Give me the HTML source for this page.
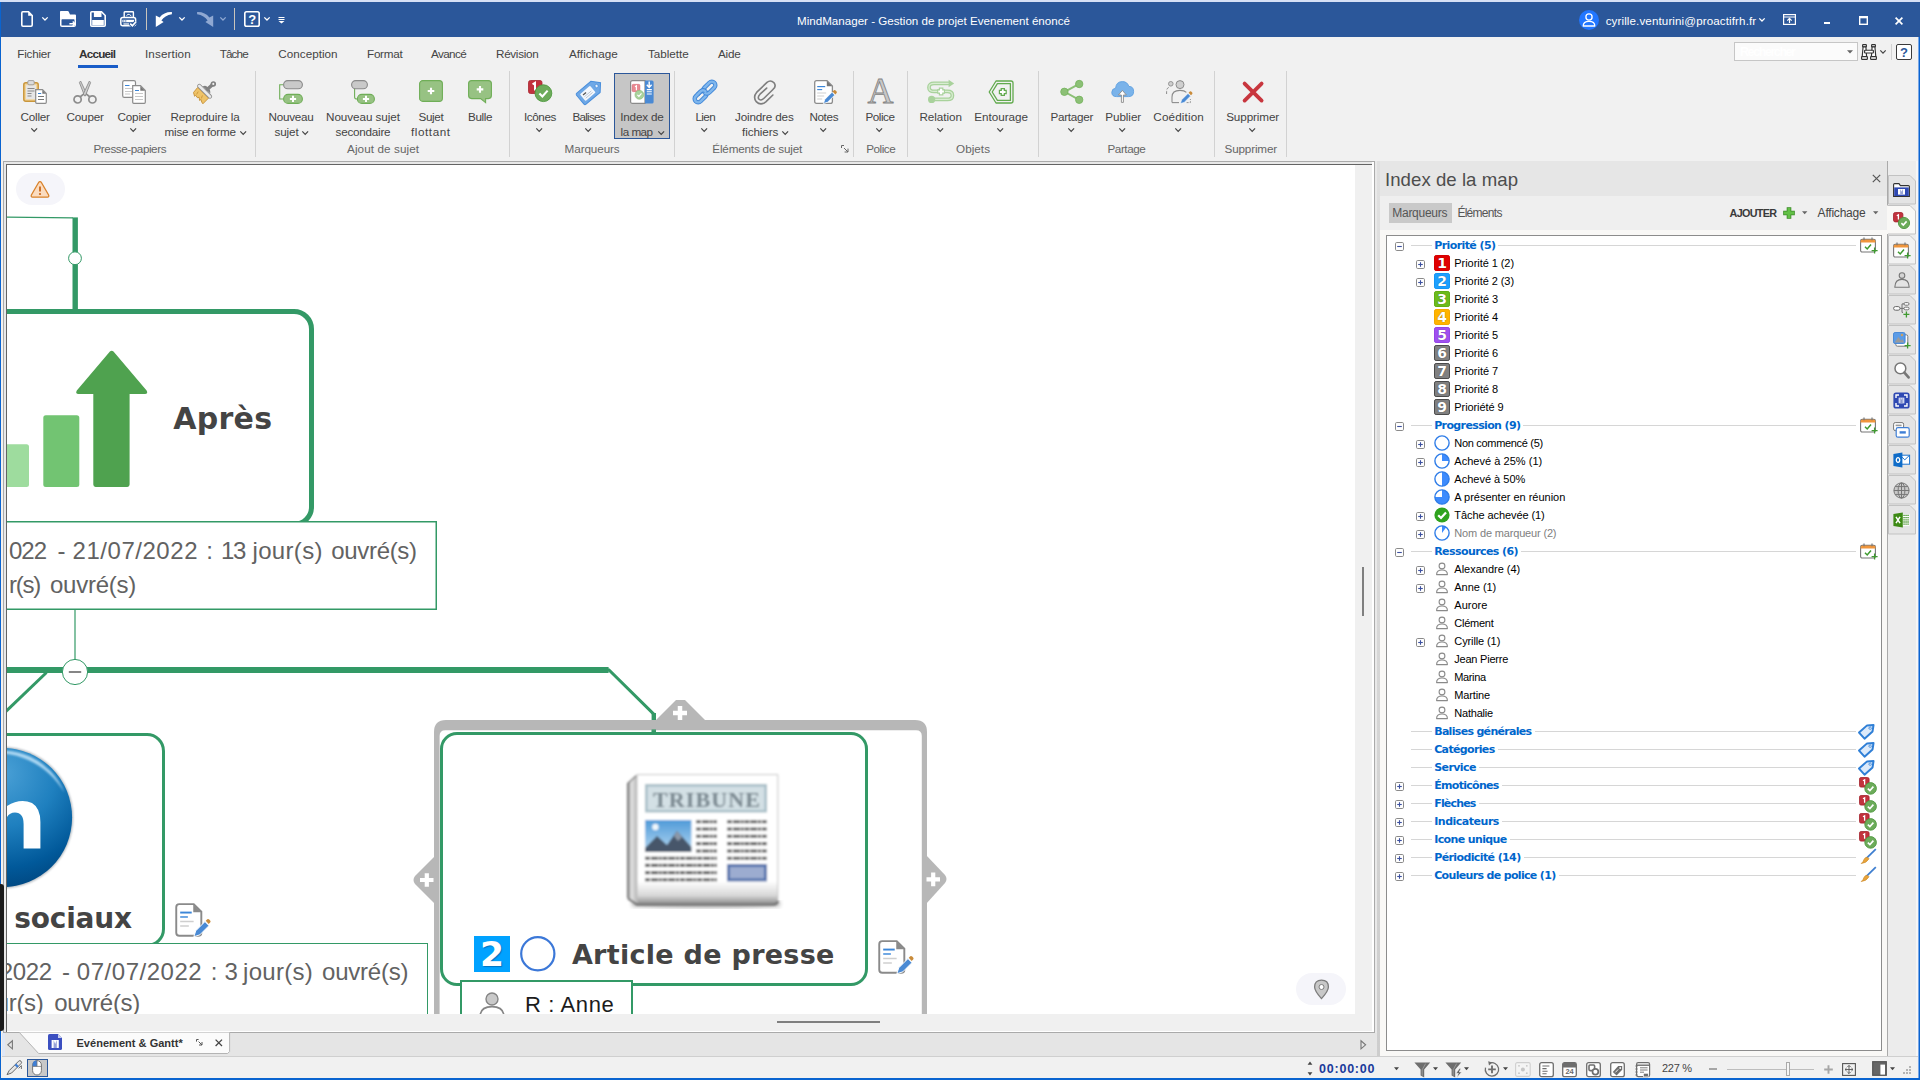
<!DOCTYPE html>
<html lang="fr"><head><meta charset="utf-8"><title>MindManager - Gestion de projet Evenement énoncé</title>
<style>
html,body{margin:0;padding:0}
body{width:1920px;height:1080px;overflow:hidden;position:relative;background:#f1f1f1;font-family:"Liberation Sans",sans-serif}
.b{position:absolute;display:block;box-sizing:border-box}
.t{position:absolute;white-space:nowrap;margin:0;padding:0}
svg{overflow:visible}
</style></head>
<body>
<div class="b" style="left:0px;top:0px;width:1920px;height:2px;background:#d6e0f5;"></div>
<div class="b" style="left:0px;top:2px;width:1920px;height:35px;background:#2b579a;"></div>
<svg class="b" style="left:21px;top:11px;" width="12" height="16" viewBox="0 0 12 16"><path d="M1.8 0.8 H7.5 L11.2 4.5 V14 Q11.2 15.2 10 15.2 H2 Q0.8 15.2 0.8 14 V2 Q0.8 0.8 1.8 0.8 Z" fill="none" stroke="#fff" stroke-width="1.6"/><path d="M7.2 0.8 L11.2 4.8 H7.2 Z" fill="#fff"/></svg>
<svg class="b" style="left:42px;top:17px;" width="6" height="4" viewBox="0 0 6 4"><path d="M0.3 0.4 L3.0 3 L5.7 0.4" fill="none" stroke="#fff" stroke-width="1.3"/></svg>
<svg class="b" style="left:60px;top:11px;" width="17" height="16" viewBox="0 0 17 16"><path d="M0.8 0H7.6Q8.4 0 8.8 0.8L10 3.4H15Q16 3.4 16 4.4V8.4H0V0.8Q0 0 0.8 0Z" fill="#fff"/><rect x="0.75" y="7.6" width="14.5" height="7.6" rx="1.3" fill="#2b579a" stroke="#fff" stroke-width="1.5"/><path d="M9.4 12.7H14.8M12.7 10.5L14.9 12.7 12.7 14.9" fill="none" stroke="#fff" stroke-width="1.4"/></svg>
<svg class="b" style="left:90px;top:11px;" width="16" height="16" viewBox="0 0 16 16"><path d="M0.8 1.8Q0.8 0.8 1.8 0.8H11.5L15.2 4.5V14.2Q15.2 15.2 14.2 15.2H1.8Q0.8 15.2 0.8 14.2Z" fill="none" stroke="#fff" stroke-width="1.6"/><rect x="3.9" y="0.8" width="7.6" height="5.2" fill="#fff"/><rect x="2.2" y="9" width="11.6" height="5.4" fill="#fff"/></svg>
<svg class="b" style="left:120px;top:11px;" width="17" height="16" viewBox="0 0 17 16"><path d="M4.2 6.4V1.4Q4.2 0.8 4.8 0.8H12.8Q13.4 0.8 13.4 1.4V6.4" fill="none" stroke="#fff" stroke-width="1.4"/><path d="M6.4 4.8Q8 2.4 9.6 3.6L11.4 5" fill="none" stroke="#fff" stroke-width="1"/><rect x="0.8" y="6.6" width="14.8" height="8.2" rx="2" fill="#2b579a" stroke="#fff" stroke-width="1.5"/><rect x="2.4" y="8.8" width="11.6" height="2.4" fill="#fff"/><rect x="3.2" y="9.4" width="1.1" height="1.1" fill="#2b579a"/><rect x="5.2" y="9.4" width="1.1" height="1.1" fill="#2b579a"/><path d="M3.4 13H9" stroke="#fff" stroke-width="1.2"/><path d="M10.2 12.6L12.4 14.8 15.8 11" fill="none" stroke="#2b579a" stroke-width="3.6"/><path d="M10.2 12.6L12.4 14.8 15.8 11" fill="none" stroke="#fff" stroke-width="1.8"/></svg>
<div class="b" style="left:146px;top:8px;width:1px;height:22px;background:#c9c4bc;"></div>
<svg class="b" style="left:155px;top:11px;" width="18" height="16" viewBox="0 0 18 16"><path d="M16.9 0.9Q9 0.6 4.6 6.4L0.8 4.6V15.9L8.6 11 6.4 9.4Q9.6 4.4 16.9 3.2Z" fill="#fff"/></svg>
<svg class="b" style="left:179px;top:17px;" width="6" height="4" viewBox="0 0 6 4"><path d="M0.3 0.4 L3.0 3 L5.7 0.4" fill="none" stroke="#fff" stroke-width="1.3"/></svg>
<svg class="b" style="left:196px;top:11px;" width="18" height="16" viewBox="0 0 18 16"><path d="M1.1 0.9Q9 0.6 13.4 6.4L17.2 4.6V15.9L9.4 11 11.6 9.4Q8.4 4.4 1.1 3.2Z" fill="#8fa8d2"/></svg>
<svg class="b" style="left:220px;top:17px;" width="6" height="4" viewBox="0 0 6 4"><path d="M0.3 0.4 L3.0 3 L5.7 0.4" fill="none" stroke="#8fa8d2" stroke-width="1.3"/></svg>
<div class="b" style="left:234px;top:8px;width:1px;height:22px;background:#c9c4bc;"></div>
<svg class="b" style="left:244px;top:11px;" width="16" height="16" viewBox="0 0 16 16"><rect x="0.8" y="0.8" width="14.4" height="14.4" rx="1.8" fill="none" stroke="#fff" stroke-width="1.6"/></svg>
<div class="t" style="top:11.20px;font-size:13px;line-height:17px;color:#fff;font-family:'Liberation Sans', sans-serif;font-weight:700;left:252.20px;transform:translateX(-50%);">?</div>
<svg class="b" style="left:264px;top:17px;" width="6" height="4" viewBox="0 0 6 4"><path d="M0.3 0.4 L3.0 3 L5.7 0.4" fill="none" stroke="#fff" stroke-width="1.3"/></svg>
<svg class="b" style="left:278px;top:17px;" width="7" height="7" viewBox="0 0 7 7"><rect x="0.5" y="0" width="6" height="1" fill="#fff"/><rect x="0.5" y="2" width="6" height="1" fill="#fff"/><path d="M0.5 4H6.5L3.5 6.6Z" fill="#fff"/></svg>
<div class="t" style="top:12.78px;font-size:11.6px;line-height:15px;color:#fff;font-family:'Liberation Sans', sans-serif;left:797.00px;letter-spacing:0.008px;">MindManager - Gestion de projet Evenement énoncé</div>
<svg class="b" style="left:1579px;top:10px;" width="20" height="20" viewBox="0 0 20 20"><circle cx="10" cy="10" r="10" fill="#2176ff"/><circle cx="10" cy="7" r="3.1" fill="none" stroke="#fff" stroke-width="1.3"/><path d="M4.2 16 Q4.2 11.4 10 11.4 Q15.8 11.4 15.8 16 Z" fill="none" stroke="#fff" stroke-width="1.3" stroke-linejoin="round"/></svg>
<div class="t" style="top:12.78px;font-size:11.6px;line-height:15px;color:#fff;font-family:'Liberation Sans', sans-serif;left:1605.70px;letter-spacing:0.114px;">cyrille.venturini@proactifrh.fr</div>
<svg class="b" style="left:1759px;top:18px;" width="6" height="4" viewBox="0 0 6 4"><path d="M0.3 0.4 L3.0 3 L5.7 0.4" fill="none" stroke="#fff" stroke-width="1.3"/></svg>
<svg class="b" style="left:1783px;top:14px;" width="13" height="11" viewBox="0 0 13 11"><rect x="0.6" y="0.6" width="11.8" height="9.8" fill="none" stroke="#fff" stroke-width="1.2"/><path d="M0.6 3 H12.4" stroke="#fff" stroke-width="1"/><path d="M6.5 9 V4.6 M4.3 6.6 L6.5 4.4 L8.7 6.6" fill="none" stroke="#fff" stroke-width="1.2"/></svg>
<div class="b" style="left:1824px;top:22px;width:6px;height:2px;background:#fff;"></div>
<svg class="b" style="left:1859px;top:16px;" width="9" height="9" viewBox="0 0 9 9"><rect x="0.7" y="0.7" width="7.6" height="7.6" fill="none" stroke="#fff" stroke-width="1.4"/><rect x="0.7" y="0.7" width="7.6" height="1.6" fill="#fff"/></svg>
<svg class="b" style="left:1895px;top:17px;" width="8" height="8" viewBox="0 0 8 8"><path d="M0.6 0.6 L7.4 7.4 M7.4 0.6 L0.6 7.4" stroke="#fff" stroke-width="1.7"/></svg>
<div class="b" style="left:0px;top:2px;width:1px;height:1078px;background:#0a64d0;"></div>
<div class="b" style="left:1919px;top:37px;width:1px;height:1043px;background:#0a64d0;"></div>
<div class="b" style="left:1918px;top:37px;width:1px;height:1041px;background:#7aa7e6;"></div>
<div class="b" style="left:0px;top:1078px;width:1920px;height:2px;background:#0a64d0;"></div>
<div class="b" style="left:1px;top:37px;width:1px;height:1041px;background:#f8f1ea;"></div>
<div class="t" style="top:46.45px;font-size:11.7px;line-height:15px;color:#444;font-family:'Liberation Sans', sans-serif;left:17.30px;letter-spacing:-0.230px;">Fichier</div>
<div class="t" style="top:46.45px;font-size:11.7px;line-height:15px;color:#333;font-family:'Liberation Sans', sans-serif;font-weight:700;left:79.00px;letter-spacing:-0.763px;">Accueil</div>
<div class="t" style="top:46.45px;font-size:11.7px;line-height:15px;color:#444;font-family:'Liberation Sans', sans-serif;left:145.00px;letter-spacing:0.109px;">Insertion</div>
<div class="t" style="top:46.45px;font-size:11.7px;line-height:15px;color:#444;font-family:'Liberation Sans', sans-serif;left:219.70px;letter-spacing:-0.871px;">Tâche</div>
<div class="t" style="top:46.45px;font-size:11.7px;line-height:15px;color:#444;font-family:'Liberation Sans', sans-serif;left:278.30px;letter-spacing:0.018px;">Conception</div>
<div class="t" style="top:46.45px;font-size:11.7px;line-height:15px;color:#444;font-family:'Liberation Sans', sans-serif;left:367.00px;letter-spacing:-0.263px;">Format</div>
<div class="t" style="top:46.45px;font-size:11.7px;line-height:15px;color:#444;font-family:'Liberation Sans', sans-serif;left:431.00px;letter-spacing:-0.616px;">Avancé</div>
<div class="t" style="top:46.45px;font-size:11.7px;line-height:15px;color:#444;font-family:'Liberation Sans', sans-serif;left:496.00px;letter-spacing:-0.304px;">Révision</div>
<div class="t" style="top:46.45px;font-size:11.7px;line-height:15px;color:#444;font-family:'Liberation Sans', sans-serif;left:569.00px;letter-spacing:0.021px;">Affichage</div>
<div class="t" style="top:46.45px;font-size:11.7px;line-height:15px;color:#444;font-family:'Liberation Sans', sans-serif;left:648.00px;letter-spacing:-0.034px;">Tablette</div>
<div class="t" style="top:46.45px;font-size:11.7px;line-height:15px;color:#444;font-family:'Liberation Sans', sans-serif;left:718.00px;letter-spacing:-0.235px;">Aide</div>
<div class="b" style="left:78px;top:65px;width:40px;height:3px;background:#1a5dc8;"></div>
<div class="b" style="left:255px;top:71px;width:1px;height:86px;background:#d2d2d2;"></div>
<div class="b" style="left:509px;top:71px;width:1px;height:86px;background:#d2d2d2;"></div>
<div class="b" style="left:674px;top:71px;width:1px;height:86px;background:#d2d2d2;"></div>
<div class="b" style="left:853px;top:71px;width:1px;height:86px;background:#d2d2d2;"></div>
<div class="b" style="left:907px;top:71px;width:1px;height:86px;background:#d2d2d2;"></div>
<div class="b" style="left:1038px;top:71px;width:1px;height:86px;background:#d2d2d2;"></div>
<div class="b" style="left:1214px;top:71px;width:1px;height:86px;background:#d2d2d2;"></div>
<div class="b" style="left:1286px;top:71px;width:1px;height:86px;background:#d2d2d2;"></div>
<div class="b" style="left:614px;top:73px;width:56px;height:66px;background:#c6c6c6;border:1px solid #2b579a;"></div>
<div class="t" style="top:109.35px;font-size:11.7px;line-height:15px;color:#444;font-family:'Liberation Sans', sans-serif;left:20.60px;letter-spacing:-0.226px;">Coller</div>
<div class="t" style="top:109.35px;font-size:11.7px;line-height:15px;color:#444;font-family:'Liberation Sans', sans-serif;left:66.50px;letter-spacing:-0.169px;">Couper</div>
<div class="t" style="top:109.35px;font-size:11.7px;line-height:15px;color:#444;font-family:'Liberation Sans', sans-serif;left:117.50px;letter-spacing:-0.188px;">Copier</div>
<div class="t" style="top:109.35px;font-size:11.7px;line-height:15px;color:#444;font-family:'Liberation Sans', sans-serif;left:170.40px;letter-spacing:-0.064px;">Reproduire la</div>
<div class="t" style="top:109.35px;font-size:11.7px;line-height:15px;color:#444;font-family:'Liberation Sans', sans-serif;left:268.50px;letter-spacing:-0.258px;">Nouveau</div>
<div class="t" style="top:109.35px;font-size:11.7px;line-height:15px;color:#444;font-family:'Liberation Sans', sans-serif;left:326.00px;letter-spacing:-0.061px;">Nouveau sujet</div>
<div class="t" style="top:109.35px;font-size:11.7px;line-height:15px;color:#444;font-family:'Liberation Sans', sans-serif;left:418.50px;letter-spacing:-0.348px;">Sujet</div>
<div class="t" style="top:109.35px;font-size:11.7px;line-height:15px;color:#444;font-family:'Liberation Sans', sans-serif;left:468.00px;letter-spacing:-0.375px;">Bulle</div>
<div class="t" style="top:109.35px;font-size:11.7px;line-height:15px;color:#444;font-family:'Liberation Sans', sans-serif;left:524.00px;letter-spacing:-0.408px;">Icônes</div>
<div class="t" style="top:109.35px;font-size:11.7px;line-height:15px;color:#444;font-family:'Liberation Sans', sans-serif;left:572.50px;letter-spacing:-0.765px;">Balises</div>
<div class="t" style="top:109.35px;font-size:11.7px;line-height:15px;color:#444;font-family:'Liberation Sans', sans-serif;left:620.25px;letter-spacing:-0.192px;">Index de</div>
<div class="t" style="top:109.35px;font-size:11.7px;line-height:15px;color:#444;font-family:'Liberation Sans', sans-serif;left:695.40px;letter-spacing:-0.620px;">Lien</div>
<div class="t" style="top:109.35px;font-size:11.7px;line-height:15px;color:#444;font-family:'Liberation Sans', sans-serif;left:735.00px;letter-spacing:-0.169px;">Joindre des</div>
<div class="t" style="top:109.35px;font-size:11.7px;line-height:15px;color:#444;font-family:'Liberation Sans', sans-serif;left:809.40px;letter-spacing:-0.362px;">Notes</div>
<div class="t" style="top:109.35px;font-size:11.7px;line-height:15px;color:#444;font-family:'Liberation Sans', sans-serif;left:865.40px;letter-spacing:-0.449px;">Police</div>
<div class="t" style="top:109.35px;font-size:11.7px;line-height:15px;color:#444;font-family:'Liberation Sans', sans-serif;left:919.40px;letter-spacing:-0.056px;">Relation</div>
<div class="t" style="top:109.35px;font-size:11.7px;line-height:15px;color:#444;font-family:'Liberation Sans', sans-serif;left:974.20px;letter-spacing:-0.017px;">Entourage</div>
<div class="t" style="top:109.35px;font-size:11.7px;line-height:15px;color:#444;font-family:'Liberation Sans', sans-serif;left:1050.50px;letter-spacing:-0.290px;">Partager</div>
<div class="t" style="top:109.35px;font-size:11.7px;line-height:15px;color:#444;font-family:'Liberation Sans', sans-serif;left:1105.30px;letter-spacing:-0.082px;">Publier</div>
<div class="t" style="top:109.35px;font-size:11.7px;line-height:15px;color:#444;font-family:'Liberation Sans', sans-serif;left:1153.30px;letter-spacing:0.139px;">Coédition</div>
<div class="t" style="top:109.35px;font-size:11.7px;line-height:15px;color:#444;font-family:'Liberation Sans', sans-serif;left:1226.20px;letter-spacing:-0.115px;">Supprimer</div>
<div class="t" style="top:124.35px;font-size:11.7px;line-height:15px;color:#444;font-family:'Liberation Sans', sans-serif;left:164.60px;letter-spacing:-0.221px;">mise en forme</div>
<div class="t" style="top:124.35px;font-size:11.7px;line-height:15px;color:#444;font-family:'Liberation Sans', sans-serif;left:274.40px;letter-spacing:-0.076px;">sujet</div>
<div class="t" style="top:124.35px;font-size:11.7px;line-height:15px;color:#444;font-family:'Liberation Sans', sans-serif;left:335.60px;letter-spacing:-0.243px;">secondaire</div>
<div class="t" style="top:124.35px;font-size:11.7px;line-height:15px;color:#444;font-family:'Liberation Sans', sans-serif;left:411.00px;letter-spacing:0.558px;">flottant</div>
<div class="t" style="top:124.35px;font-size:11.7px;line-height:15px;color:#444;font-family:'Liberation Sans', sans-serif;left:620.60px;letter-spacing:-0.519px;">la map</div>
<div class="t" style="top:124.35px;font-size:11.7px;line-height:15px;color:#444;font-family:'Liberation Sans', sans-serif;left:742.00px;letter-spacing:-0.090px;">fichiers</div>
<svg class="b" style="left:30.55px;top:128.2px;" width="6.4" height="4.4" viewBox="0 0 6.4 4.4"><path d="M0.3 0.4 L3.2 3.4 L6.1000000000000005 0.4" fill="none" stroke="#444" stroke-width="1.2"/></svg>
<svg class="b" style="left:129.70000000000002px;top:128.2px;" width="6.4" height="4.4" viewBox="0 0 6.4 4.4"><path d="M0.3 0.4 L3.2 3.4 L6.1000000000000005 0.4" fill="none" stroke="#444" stroke-width="1.2"/></svg>
<svg class="b" style="left:535.8px;top:128.2px;" width="6.4" height="4.4" viewBox="0 0 6.4 4.4"><path d="M0.3 0.4 L3.2 3.4 L6.1000000000000005 0.4" fill="none" stroke="#444" stroke-width="1.2"/></svg>
<svg class="b" style="left:584.6999999999999px;top:128.2px;" width="6.4" height="4.4" viewBox="0 0 6.4 4.4"><path d="M0.3 0.4 L3.2 3.4 L6.1000000000000005 0.4" fill="none" stroke="#444" stroke-width="1.2"/></svg>
<svg class="b" style="left:700.55px;top:128.2px;" width="6.4" height="4.4" viewBox="0 0 6.4 4.4"><path d="M0.3 0.4 L3.2 3.4 L6.1000000000000005 0.4" fill="none" stroke="#444" stroke-width="1.2"/></svg>
<svg class="b" style="left:819.55px;top:128.2px;" width="6.4" height="4.4" viewBox="0 0 6.4 4.4"><path d="M0.3 0.4 L3.2 3.4 L6.1000000000000005 0.4" fill="none" stroke="#444" stroke-width="1.2"/></svg>
<svg class="b" style="left:875.55px;top:128.2px;" width="6.4" height="4.4" viewBox="0 0 6.4 4.4"><path d="M0.3 0.4 L3.2 3.4 L6.1000000000000005 0.4" fill="none" stroke="#444" stroke-width="1.2"/></svg>
<svg class="b" style="left:936.55px;top:128.2px;" width="6.4" height="4.4" viewBox="0 0 6.4 4.4"><path d="M0.3 0.4 L3.2 3.4 L6.1000000000000005 0.4" fill="none" stroke="#444" stroke-width="1.2"/></svg>
<svg class="b" style="left:996.8px;top:128.2px;" width="6.4" height="4.4" viewBox="0 0 6.4 4.4"><path d="M0.3 0.4 L3.2 3.4 L6.1000000000000005 0.4" fill="none" stroke="#444" stroke-width="1.2"/></svg>
<svg class="b" style="left:1067.6px;top:128.2px;" width="6.4" height="4.4" viewBox="0 0 6.4 4.4"><path d="M0.3 0.4 L3.2 3.4 L6.1000000000000005 0.4" fill="none" stroke="#444" stroke-width="1.2"/></svg>
<svg class="b" style="left:1118.5px;top:128.2px;" width="6.4" height="4.4" viewBox="0 0 6.4 4.4"><path d="M0.3 0.4 L3.2 3.4 L6.1000000000000005 0.4" fill="none" stroke="#444" stroke-width="1.2"/></svg>
<svg class="b" style="left:1174.6px;top:128.2px;" width="6.4" height="4.4" viewBox="0 0 6.4 4.4"><path d="M0.3 0.4 L3.2 3.4 L6.1000000000000005 0.4" fill="none" stroke="#444" stroke-width="1.2"/></svg>
<svg class="b" style="left:1248.8px;top:128.2px;" width="6.4" height="4.4" viewBox="0 0 6.4 4.4"><path d="M0.3 0.4 L3.2 3.4 L6.1000000000000005 0.4" fill="none" stroke="#444" stroke-width="1.2"/></svg>
<svg class="b" style="left:240px;top:131px;" width="6.4" height="4.4" viewBox="0 0 6.4 4.4"><path d="M0.3 0.4 L3.2 3.4 L6.1000000000000005 0.4" fill="none" stroke="#444" stroke-width="1.2"/></svg>
<svg class="b" style="left:302px;top:131px;" width="6.4" height="4.4" viewBox="0 0 6.4 4.4"><path d="M0.3 0.4 L3.2 3.4 L6.1000000000000005 0.4" fill="none" stroke="#444" stroke-width="1.2"/></svg>
<svg class="b" style="left:658px;top:131px;" width="6.4" height="4.4" viewBox="0 0 6.4 4.4"><path d="M0.3 0.4 L3.2 3.4 L6.1000000000000005 0.4" fill="none" stroke="#444" stroke-width="1.2"/></svg>
<svg class="b" style="left:782px;top:131px;" width="6.4" height="4.4" viewBox="0 0 6.4 4.4"><path d="M0.3 0.4 L3.2 3.4 L6.1000000000000005 0.4" fill="none" stroke="#444" stroke-width="1.2"/></svg>
<div class="t" style="top:141.35px;font-size:11.7px;line-height:15px;color:#666;font-family:'Liberation Sans', sans-serif;left:93.50px;letter-spacing:-0.431px;">Presse-papiers</div>
<div class="t" style="top:141.35px;font-size:11.7px;line-height:15px;color:#666;font-family:'Liberation Sans', sans-serif;left:347.00px;letter-spacing:0.090px;">Ajout de sujet</div>
<div class="t" style="top:141.35px;font-size:11.7px;line-height:15px;color:#666;font-family:'Liberation Sans', sans-serif;left:564.60px;letter-spacing:-0.097px;">Marqueurs</div>
<div class="t" style="top:141.35px;font-size:11.7px;line-height:15px;color:#666;font-family:'Liberation Sans', sans-serif;left:712.30px;letter-spacing:-0.182px;">Éléments de sujet</div>
<div class="t" style="top:141.35px;font-size:11.7px;line-height:15px;color:#666;font-family:'Liberation Sans', sans-serif;left:866.25px;letter-spacing:-0.489px;">Police</div>
<div class="t" style="top:141.35px;font-size:11.7px;line-height:15px;color:#666;font-family:'Liberation Sans', sans-serif;left:956.00px;letter-spacing:0.044px;">Objets</div>
<div class="t" style="top:141.35px;font-size:11.7px;line-height:15px;color:#666;font-family:'Liberation Sans', sans-serif;left:1107.50px;letter-spacing:-0.440px;">Partage</div>
<div class="t" style="top:141.35px;font-size:11.7px;line-height:15px;color:#666;font-family:'Liberation Sans', sans-serif;left:1224.50px;letter-spacing:-0.153px;">Supprimer</div>
<svg class="b" style="left:841px;top:145px;" width="8" height="8" viewBox="0 0 8 8"><path d="M0.5 3 V0.5 H3 M3 3 L7 7 M7 3.6 V7 H3.6" fill="none" stroke="#666" stroke-width="1"/></svg>
<svg class="b" style="left:23px;top:80px;" width="24" height="24" viewBox="0 0 24 24"><rect x="0.8" y="2.8" width="14.4" height="18.4" rx="2" fill="#f2d49b" stroke="#c9963b" stroke-width="1.5"/><rect x="3" y="5.2" width="10" height="14" fill="#e6e6e6"/><rect x="4.8" y="0.6" width="6.4" height="4.2" rx="1.2" fill="#dcdcdc" stroke="#9a9a9a" stroke-width="0.9"/><path d="M4.5 8.5h7M4.5 11h7M4.5 13.5h4M4.5 16h4" stroke="#8a8a8a" stroke-width="1"/><path d="M12.7 9.7H19.5L23.3 13.5V22.3Q23.3 23.3 22.3 23.3H13.7Q12.7 23.3 12.7 22.3Z" fill="#fff" stroke="#8c8c8c" stroke-width="1.2"/><path d="M19.3 10L23 13.7H19.3Z" fill="#777"/><path d="M15 13.5h3.2" stroke="#3b86d8" stroke-width="1"/><path d="M15 16.5h6M15 19.5h6" stroke="#777" stroke-width="1"/></svg>
<svg class="b" style="left:73px;top:80px;" width="24" height="24" viewBox="0 0 24 24"><path d="M7.6 1L13.9 14.4 11.6 15.9 6.4 2.6Z" fill="#cfcfcf" stroke="#8c8c8c" stroke-width="0.9"/><path d="M16.4 1L10.1 14.4 12.4 15.9 17.6 2.6Z" fill="#cfcfcf" stroke="#8c8c8c" stroke-width="0.9"/><circle cx="4.6" cy="19.4" r="3.6" fill="none" stroke="#8c8c8c" stroke-width="1.7"/><circle cx="19.4" cy="19.4" r="3.6" fill="none" stroke="#8c8c8c" stroke-width="1.7"/><path d="M10.9 13.8L7 17M13.1 13.8L17 17" stroke="#8c8c8c" stroke-width="1.7"/></svg>
<svg class="b" style="left:122px;top:80px;" width="24" height="24" viewBox="0 0 24 24"><rect x="0.7" y="0.7" width="12.8" height="16.6" rx="1.6" fill="#fff" stroke="#8c8c8c" stroke-width="1.2"/><path d="M3 5.5h4.5" stroke="#3b86d8" stroke-width="1"/><path d="M3 8.5h7.5M3 11.5h7.5M3 14h5" stroke="#c8c8c8" stroke-width="1"/><path d="M10.7 5.7H18.5L23.3 10.5V22.3q0 1-1 1H11.7q-1 0-1-1Z" fill="#fff" stroke="#8c8c8c" stroke-width="1.2"/><path d="M18.3 6L23 10.7H18.3Z" fill="#777"/><path d="M13 10.5h4" stroke="#3b86d8" stroke-width="1"/><path d="M13 13.5h8M13 16.5h8M13 19.5h8" stroke="#c8c8c8" stroke-width="1"/></svg>
<svg class="b" style="left:193px;top:80px;" width="24" height="24" viewBox="0 0 24 24"><path d="M4.7 7.4L15.5 18.1 9.9 23.8 8.7 22 8.1 19.5 6.5 20.4 6.2 17.3 4.4 17.7 2.7 15.3 1.6 16.3 0.5 12.5Z" fill="#efc368" stroke="#c58f34" stroke-width="0.9" stroke-linejoin="round"/><path d="M5.2 11.6L3.6 14.4M9.4 15.4L8.4 18.4" stroke="#c58f34" stroke-width="0.8"/><path d="M9.6 6.3Q13.6 4.4 15.4 8.2Q17.8 10 17.2 13.6Z" fill="#818181"/><path d="M14.4 9.2L19.4 4.8" stroke="#818181" stroke-width="3.4" stroke-linecap="round"/><circle cx="20.3" cy="3.9" r="1.9" fill="#f1f1f1" stroke="#818181" stroke-width="1.7"/><path d="M6.3 6L17 16.6" stroke="#8a8a8a" stroke-width="4.2" stroke-linecap="round"/><path d="M6.3 6L17 16.6" stroke="#ebebeb" stroke-width="2.6" stroke-linecap="round"/></svg>
<svg class="b" style="left:279px;top:80px;" width="24" height="24" viewBox="0 0 24 24"><path d="M4.5 4.8H0.7V19H4.5" fill="none" stroke="#6fae57" stroke-width="1.1"/><rect x="4.6" y="0.6" width="18.8" height="8.2" rx="4.1" fill="#c9c9c9" stroke="#8a8a8a" stroke-width="1.1"/><rect x="4.6" y="14.4" width="18.8" height="9" rx="4.5" fill="#97c283" stroke="#6fae57" stroke-width="1.1"/><path d="M10.9 18.9H17.1M14 15.799999999999999V22.0" stroke="#fff" stroke-width="2"/></svg>
<svg class="b" style="left:351px;top:80px;" width="24" height="24" viewBox="0 0 24 24"><path d="M3.6 8.8V17.2Q3.6 19 6.2 19" fill="none" stroke="#6fae57" stroke-width="1.1"/><rect x="0.6" y="0.6" width="15.8" height="8.2" rx="4.1" fill="#c9c9c9" stroke="#8a8a8a" stroke-width="1.1"/><rect x="6.4" y="14.4" width="17" height="9" rx="4.5" fill="#97c283" stroke="#6fae57" stroke-width="1.1"/><path d="M11.9 18.9H18.1M15 15.799999999999999V22.0" stroke="#fff" stroke-width="2"/></svg>
<svg class="b" style="left:419px;top:80px;" width="24" height="24" viewBox="0 0 24 24"><rect x="0.6" y="0.6" width="22.8" height="20.8" rx="3.2" fill="#97c283" stroke="#6fae57" stroke-width="1.1"/><path d="M8.7 11H15.3M12 7.7V14.3" stroke="#fff" stroke-width="2.1"/></svg>
<svg class="b" style="left:468px;top:80px;" width="24" height="24" viewBox="0 0 24 24"><path d="M3.6 0.6H20.4Q23.4 0.6 23.4 3.6V15.6Q23.4 18.6 20.4 18.6H17.6V22.6L12.6 18.6H3.6Q0.6 18.6 0.6 15.6V3.6Q0.6 0.6 3.6 0.6Z" fill="#97c283" stroke="#6fae57" stroke-width="1.1"/><path d="M8.7 9.4H15.3M12 6.1000000000000005V12.7" stroke="#fff" stroke-width="2.1"/></svg>
<svg class="b" style="left:528px;top:80px;" width="24" height="24" viewBox="0 0 24 24"><rect x="0.5" y="0.5" width="13.5" height="13" rx="2" fill="#c2323d" stroke="#a8242f" stroke-width="0.8"/><path d="M4.6 4.4L7 2.8V10.4" fill="none" stroke="#fff" stroke-width="2"/><circle cx="15.4" cy="13.2" r="8.4" fill="#6cab5a" stroke="#4f9a40" stroke-width="0.9"/><path d="M11.4 13.4L14.4 16.4 19.6 10.6" fill="none" stroke="#fff" stroke-width="2.1"/></svg>
<svg class="b" style="left:576px;top:80px;" width="24" height="24" viewBox="0 0 24 24"><g transform="translate(2.6 -1) rotate(-40 12 12)"><path d="M-1.5 6.2Q-1.5 4.8 0 4.8H18.4L25 12 18.4 19.2H0Q-1.5 19.2-1.5 17.8Z" fill="#6fa8e6" stroke="#4a8fdc" stroke-width="1"/><rect x="1.6" y="7.6" width="13.4" height="8.8" rx="1" fill="#f4f8fd"/><path d="M3.6 10.2h4" stroke="#555" stroke-width="1.2"/><path d="M3.6 12.4h9M3.6 14.4h9" stroke="#b9c4d0" stroke-width="0.9"/><circle cx="19.8" cy="12" r="1.7" fill="#e9f1fb" stroke="#4a8fdc" stroke-width="0.8"/></g></svg>
<svg class="b" style="left:630px;top:80px;" width="24" height="24" viewBox="0 0 24 24"><path d="M2.6 0.6H15V23.4H2.6Q0.6 23.4 0.6 21.4V2.6Q0.6 0.6 2.6 0.6Z" fill="#fff" stroke="#8a8a8a" stroke-width="1.2"/><path d="M15 0.4H22Q23.6 0.4 23.6 2V22Q23.6 23.6 22 23.6H15Z" fill="#4a8ad4"/><rect x="2.2" y="4.4" width="7.6" height="7.2" rx="1" fill="#e88a92" stroke="#d86470" stroke-width="0.7"/><path d="M5 6.8L6.4 5.9V10.2" fill="none" stroke="#fff" stroke-width="1.2"/><circle cx="9.4" cy="14.8" r="4.4" fill="#a9d29c" stroke="#8cc07e" stroke-width="0.7"/><path d="M7.4 14.9L8.9 16.4 11.5 13.4" fill="none" stroke="#fff" stroke-width="1.2"/><path d="M19.2 1.6V7M16.8 4.8L19.2 7.4 21.6 4.8" fill="none" stroke="#fff" stroke-width="1.4"/><path d="M16.8 9.6h5M16.8 11.8h5M16.8 14h5" stroke="#fff" stroke-width="1.1"/></svg>
<svg class="b" style="left:693px;top:80px;" width="24" height="24" viewBox="0 0 24 24"><g transform="rotate(-45 12 12)" fill="none"><rect x="-1.2" y="8.5" width="14" height="7" rx="3.5" stroke="#3f86d8" stroke-width="4.3"/><rect x="-1.2" y="8.5" width="14" height="7" rx="3.5" stroke="#7fb6ec" stroke-width="2.5"/><rect x="11.2" y="8.5" width="14" height="7" rx="3.5" stroke="#3f86d8" stroke-width="4.3"/><rect x="11.2" y="8.5" width="14" height="7" rx="3.5" stroke="#7fb6ec" stroke-width="2.5"/><path d="M5 8.5H9.3Q12.8 8.5 12.8 12" stroke="#3f86d8" stroke-width="4.3"/><path d="M4 8.5H9.3Q12.8 8.5 12.8 12.6" stroke="#7fb6ec" stroke-width="2.5"/></g></svg>
<svg class="b" style="left:753px;top:80px;" width="24" height="24" viewBox="0 0 24 24"><path d="M19.9 15L12.8 21.8Q7.7 26 3.2 21.6Q-0.2 16.8 3.6 12.4L14 2.4Q17.6-0.6 21 2.8Q23.6 6.2 20.2 9.2L11 18.2Q7.6 21.4 5.6 18.8Q4.6 16.6 7 14.2L13.7 8.1" fill="none" stroke="#7e7e7e" stroke-width="1.6" stroke-linecap="round" stroke-linejoin="round"/></svg>
<svg class="b" style="left:814px;top:80px;" width="24" height="24" viewBox="0 0 24 24"><path d="M2.6 0.7H13L18.4 6.1V21.4Q18.4 23.3 16.4 23.3H2.6Q0.7 23.3 0.7 21.4V2.6Q0.7 0.7 2.6 0.7Z" fill="#fff" stroke="#8c8c8c" stroke-width="1.3"/><path d="M12.8 0.9L18.2 6.3H12.8Z" fill="#777"/><path d="M3.2 6.6h8" stroke="#3b86d8" stroke-width="1.2"/><path d="M3.2 9.6h5" stroke="#3b86d8" stroke-width="1.1"/><path d="M3.2 13h9M3.2 16h7M3.2 19h5" stroke="#cfcfcf" stroke-width="1"/><path d="M9.4 23.6L10.8 19.4 18 12.2 20.8 15 13.6 22.2Z" fill="#4a8ad4" stroke="#fff" stroke-width="0.8"/><path d="M18.6 11.6L20 10.2Q20.8 9.6 21.6 10.4L22.6 11.4Q23.2 12.2 22.6 13L21.4 14.4Z" fill="#c98b3a"/></svg>
<div class="t" style="top:67.63px;font-size:36px;line-height:47px;color:#c8c8c8;font-family:'Liberation Serif', serif;left:880.50px;transform:translateX(-50%);-webkit-text-stroke:0.8px #838383;">A</div>
<svg class="b" style="left:927px;top:80px;" width="28" height="24" viewBox="0 0 28 24"><path d="M4.8 19.4H20.4Q25.4 19.4 25.4 15.4Q25.4 11.4 20.4 11.4H7Q2 11.4 2 7.4Q2 3.4 7 3.4H22.4" fill="none" stroke="#a9d29c" stroke-width="3.8"/><path d="M4.8 19.4H20.4Q25.4 19.4 25.4 15.4Q25.4 11.4 20.4 11.4H7Q2 11.4 2 7.4Q2 3.4 7 3.4H22.4" fill="none" stroke="#d9edd2" stroke-width="1.2"/><path d="M21.6 -0.2L27.2 3.5 21.6 7.2Z" fill="#a9d29c"/><circle cx="4.6" cy="19.4" r="3.6" fill="#a9d29c"/><path d="M10.2 11.5h7.8M14.1 7.6v7.8" stroke="#a9d29c" stroke-width="4.6"/><path d="M11.3 11.5h5.6M14.1 8.7v5.6" stroke="#fff" stroke-width="2.2"/></svg>
<svg class="b" style="left:988px;top:80px;" width="26" height="24" viewBox="0 0 26 24"><path d="M8 1H23Q25 1 25 3V21Q25 23 23 23H8L1.2 12Z" fill="none" stroke="#62aa4e" stroke-width="1.3" stroke-linejoin="round"/><path d="M9.4 3.6H22.4V20.4H9.4L4.2 12Z" fill="none" stroke="#62aa4e" stroke-width="1.3" stroke-linejoin="round"/><path d="M10.8 12h8M14.8 8v8" stroke="#62aa4e" stroke-width="4.4"/><path d="M12 12h5.6M14.8 9.2v5.6" stroke="#fff" stroke-width="1.8"/></svg>
<svg class="b" style="left:1060px;top:80px;" width="24" height="24" viewBox="0 0 24 24"><path d="M19.2 3.8L4.6 11.8 19.2 19.8" fill="none" stroke="#8cc076" stroke-width="1.9"/><circle cx="19.2" cy="4" r="3.7" fill="#8cc076" stroke="#74b25c" stroke-width="0.8"/><circle cx="4.4" cy="11.8" r="3.7" fill="#8cc076" stroke="#74b25c" stroke-width="0.8"/><circle cx="19.2" cy="19.8" r="3.7" fill="#8cc076" stroke="#74b25c" stroke-width="0.8"/></svg>
<svg class="b" style="left:1111px;top:80px;" width="24" height="24" viewBox="0 0 24 24"><path d="M5.6 16.6Q0.8 16.6 0.8 12.4Q0.8 8.6 4.6 8.2Q5.2 1.6 11.4 1.6Q16.4 1.6 17.8 6.4Q22.6 6.4 22.6 11.4Q22.6 16.6 17.6 16.6Z" fill="#7ab3ea" stroke="#5e9fe0" stroke-width="0.9"/><path d="M10.4 22.4V15H7.4L11.4 10.4 15.4 15H12.4V22.4Z" fill="#fff" stroke="#8a8a8a" stroke-width="0.9"/></svg>
<svg class="b" style="left:1165px;top:80px;" width="28" height="24" viewBox="0 0 28 24"><circle cx="5.8" cy="3.8" r="2.3" fill="#cfcfcf" stroke="#8c8c8c" stroke-width="0.9"/><path d="M1.6 14V11.4Q1.6 7.4 5 7.2" fill="none" stroke="#8c8c8c" stroke-width="1" stroke-dasharray="3 1.4"/><circle cx="15" cy="4.6" r="4" fill="#cfcfcf" stroke="#8c8c8c" stroke-width="1"/><path d="M7 22.6V17Q7 10.4 15 10.4Q19.4 10.4 21.4 12.4" fill="none" stroke="#8c8c8c" stroke-width="1.1"/><path d="M7 22.6H14" stroke="#8c8c8c" stroke-width="1.1"/><path d="M15.4 23.6L16.6 19.8 23 13.4 25.6 16 19.2 22.4Z" fill="#4a8ad4" stroke="#fff" stroke-width="0.6"/><path d="M23.6 12.8L24.8 11.6Q25.6 11 26.2 11.6L27.2 12.6Q27.8 13.4 27.2 14L26 15.2Z" fill="#c98b3a"/><path d="M21.6 22.6H25.4V19" fill="none" stroke="#8c8c8c" stroke-width="0.9" stroke-dasharray="2 1.2"/></svg>
<svg class="b" style="left:1241px;top:80px;" width="24" height="24" viewBox="0 0 24 24"><path d="M3.6 3.6L20.6 20.6M20.6 3.6L3.6 20.6" stroke="#c8363e" stroke-width="3.8" stroke-linecap="round"/></svg>
<div class="b" style="left:1734px;top:42px;width:124px;height:19px;background:#fbfbfb;border:1px solid #c6c6c6;"></div>
<div class="t" style="top:44.07px;font-size:12.5px;line-height:16px;color:#ffffff;font-family:'Liberation Sans', sans-serif;font-weight:700;left:1740.00px;letter-spacing:-1.422px;">Rechercher</div>
<svg class="b" style="left:1847px;top:50px;" width="6" height="4" viewBox="0 0 6 4"><path d="M0 0.3H6L3 3.6Z" fill="#666"/></svg>
<svg class="b" style="left:1861px;top:44px;" width="16" height="16" viewBox="0 0 16 16"><g fill="#fff" stroke="#333" stroke-width="1.15"><rect x="1.6" y="0.6" width="3.8" height="2.2" rx="0.6"/><rect x="10.6" y="0.6" width="3.8" height="2.2" rx="0.6"/><path d="M2.1 2.8H4.9L5.6 12.6H1.2ZM11.1 2.8H13.9L14.8 12.6H10.4Z"/><rect x="0.6" y="12.6" width="5.8" height="2.8" rx="0.6"/><rect x="9.6" y="12.6" width="5.8" height="2.8" rx="0.6"/><rect x="3.6" y="6.2" width="8.8" height="2.8" rx="0.5"/></g></svg>
<svg class="b" style="left:1880px;top:50px;" width="6" height="4.2" viewBox="0 0 6 4.2"><path d="M0.3 0.4 L3.0 3.2 L5.7 0.4" fill="none" stroke="#444" stroke-width="1.2"/></svg>
<div class="b" style="left:1891px;top:44px;width:1px;height:16px;background:#d2d2d2;"></div>
<div class="b" style="left:1896px;top:44px;width:16px;height:16px;background:#fff;border:1.3px solid #3a3a3a;border-radius:2px;"></div>
<div class="t" style="top:43.60px;font-size:13px;line-height:17px;color:#2b579a;font-family:'Liberation Sans', sans-serif;font-weight:700;left:1904.00px;transform:translateX(-50%);">?</div>
<div class="b" style="left:3px;top:161px;width:1372px;height:872px;background:#e8e8e8;border-top:1px solid #aaa;border-left:1px solid #aaa;"></div>
<div class="b" style="left:6px;top:164px;width:1366px;height:868px;background:#f0f0f0;border-top:1px solid #646464;border-left:1px solid #646464;"></div>
<div class="b" style="left:7px;top:165px;width:1348px;height:849px;background:#fff;overflow:hidden"><div class="b" style="left:-7px;top:-165px;width:1920px;height:1080px">
<div class="b" style="left:15.5px;top:173px;width:49.5px;height:32px;background:#f5f5fa;border-radius:16px;"></div>
<svg class="b" style="left:30px;top:180px;" width="20" height="19" viewBox="0 0 20 19"><path d="M10 1.6Q10.9 1.6 11.4 2.5L18.6 15Q19.4 17 17.4 17.2H2.6Q0.6 17 1.4 15L8.6 2.5Q9.1 1.6 10 1.6Z" fill="#fbdcc0" stroke="#d9822b" stroke-width="1.3"/><path d="M10 6.4V11.4" stroke="#c9661a" stroke-width="1.8"/><circle cx="10" cy="14" r="1.1" fill="#c9661a"/></svg>
<svg class="b" style="left:0px;top:210px;" width="100" height="110" viewBox="0 0 100 110"><path d="M0 7L73 7.8" stroke="#339966" stroke-width="1.2"/><path d="M75.2 7.4V100" stroke="#339966" stroke-width="5.4"/><circle cx="75" cy="48.25" r="6.4" fill="#fff" stroke="#339966" stroke-width="1"/></svg>
<div class="b" style="left:-30px;top:309px;width:344px;height:217.5px;background:#fff;border:5px solid #339966;border-radius:20px;"></div>
<svg class="b" style="left:0px;top:340px;" width="160" height="160" viewBox="0 0 160 160"><rect x="-10" y="104.3" width="39" height="42.6" rx="2.5" fill="#9edc9e"/><rect x="43.3" y="75.2" width="36" height="71.7" rx="2.5" fill="#72c472"/><path d="M109.9 11.6Q111.7 9.8 113.5 11.6L146.6 50.4Q148.4 53.8 145 54H129.6V144.6Q129.6 146.9 127.3 146.9H95.6Q93.3 146.9 93.3 144.6V54H78.4Q75 53.8 76.8 50.4Z" fill="#4fa24f"/></svg>
<div class="t" style="top:399.00px;font-size:30px;line-height:39px;color:#444;font-family:'DejaVu Sans', sans-serif;font-weight:700;left:173.25px;letter-spacing:0.262px;">Après</div>
<div class="b" style="left:-30px;top:521px;width:467px;height:89px;background:#fff;box-shadow:inset 0 0 0 1.5px #339966;"></div>
<div class="t" style="top:534.98px;font-size:24px;line-height:31px;color:#626262;font-family:'Liberation Sans', sans-serif;left:9.00px;letter-spacing:-1.023px;">022</div>
<div class="t" style="top:534.98px;font-size:24px;line-height:31px;color:#626262;font-family:'Liberation Sans', sans-serif;left:57.50px;">-</div>
<div class="t" style="top:534.98px;font-size:24px;line-height:31px;color:#626262;font-family:'Liberation Sans', sans-serif;left:72.50px;letter-spacing:0.542px;">21/07/2022</div>
<div class="t" style="top:534.98px;font-size:24px;line-height:31px;color:#626262;font-family:'Liberation Sans', sans-serif;left:206.25px;">:</div>
<div class="t" style="top:534.98px;font-size:24px;line-height:31px;color:#626262;font-family:'Liberation Sans', sans-serif;left:220.90px;letter-spacing:-1.303px;">13</div>
<div class="t" style="top:534.98px;font-size:24px;line-height:31px;color:#626262;font-family:'Liberation Sans', sans-serif;left:252.50px;letter-spacing:0.331px;">jour(s)</div>
<div class="t" style="top:534.98px;font-size:24px;line-height:31px;color:#626262;font-family:'Liberation Sans', sans-serif;left:331.25px;letter-spacing:-0.326px;">ouvré(s)</div>
<div class="t" style="top:568.58px;font-size:24px;line-height:31px;color:#626262;font-family:'Liberation Sans', sans-serif;left:9.00px;letter-spacing:-1.245px;">r(s)</div>
<div class="t" style="top:568.58px;font-size:24px;line-height:31px;color:#626262;font-family:'Liberation Sans', sans-serif;left:50.00px;letter-spacing:-0.254px;">ouvré(s)</div>
<svg class="b" style="left:0px;top:600px;" width="700" height="140" viewBox="0 0 700 140"><path d="M75 9.5V60" stroke="#339966" stroke-width="1.2"/><path d="M0 70H609L654 114.4" fill="none" stroke="#339966" stroke-width="3" stroke-linejoin="miter"/><path d="M0 70H608.6" stroke="#339966" stroke-width="5.8"/><path d="M653.8 113V132.5" stroke="#339966" stroke-width="4.4"/><path d="M46.5 72.5L0 117" stroke="#339966" stroke-width="3"/><circle cx="75" cy="72" r="12.6" fill="#fff" stroke="#339966" stroke-width="1"/><path d="M68.8 72H81.2" stroke="#444" stroke-width="1.3"/></svg>
<div class="b" style="left:-30px;top:732.5px;width:195px;height:214px;background:#fff;border:3px solid #339966;border-radius:18px;"></div>
<svg class="b" style="left:-70px;top:745px;" width="146" height="146" viewBox="0 0 146 146"><defs><filter id="lbl" x="-10%" y="-10%" width="120%" height="120%"><feGaussianBlur stdDeviation="0.9"/></filter><radialGradient id="lg" cx="0.5" cy="0.18" r="0.85"><stop offset="0" stop-color="#4aa0d6"/><stop offset="0.45" stop-color="#1f80bf"/><stop offset="0.8" stop-color="#01599a"/><stop offset="1" stop-color="#00467f"/></radialGradient><linearGradient id="hl" x1="0" y1="0" x2="0" y2="1"><stop offset="0" stop-color="#bfe4fa" stop-opacity="0.95"/><stop offset="1" stop-color="#bfe4fa" stop-opacity="0"/></linearGradient></defs><circle cx="72.5" cy="72.5" r="70.6" fill="#6d7a86" opacity="0.55" filter="url(#lbl)"/><circle cx="72.5" cy="72.5" r="69.6" fill="url(#lg)"/><path d="M50 9.4A67 67 0 0 1 134.4 47.6A80 80 0 0 0 50 9.4Z" fill="#c4e6fb" opacity="0.85" filter="url(#lbl)"/><path d="M77 61Q90 53 102 58Q110.4 63 110.4 77V103.4H93.6V79Q93.6 67.4 85 67.4Q79.6 67.4 77 72Z" fill="#fff"/></svg>
<div class="t" style="top:900.70px;font-size:28px;line-height:36px;color:#444;font-family:'DejaVu Sans', sans-serif;font-weight:700;left:14.20px;letter-spacing:-0.167px;">sociaux</div>
<svg class="b" style="left:175px;top:901.5px;" width="36.5" height="36.5" viewBox="0 0 38 36"><path d="M4.5 1.2H19.5L27.4 9.1V31Q27.4 34.2 24.2 34.2H4.5Q1.3 34.2 1.3 31V4.4Q1.3 1.2 4.5 1.2Z" fill="#fff" stroke="#8a8a8a" stroke-width="2"/><path d="M19 1.6L27 9.6H19Z" fill="#8a8a8a"/><path d="M5.4 10h12" stroke="#3b86d8" stroke-width="2"/><path d="M5.4 14.6h8" stroke="#5b9be0" stroke-width="1.8"/><path d="M5.4 19.4h14M5.4 24h9" stroke="#cfcfcf" stroke-width="1.6"/><path d="M19.6 35.2L21.6 29 31.2 19.4 35.4 23.6 25.8 33.2Z" fill="#4a8ad4" stroke="#fff" stroke-width="1"/><path d="M32 18.6L33.6 17Q34.6 16.2 35.6 17.2L36.6 18.2Q37.6 19.4 36.6 20.4L35 22Z" fill="#c98b3a"/></svg>
<div class="b" style="left:-30px;top:943px;width:457.5px;height:120px;background:#fff;border:1px solid #339966;"></div>
<div class="t" style="top:956.18px;font-size:24px;line-height:31px;color:#626262;font-family:'Liberation Sans', sans-serif;right:1868.40px;letter-spacing:-0.4px;">2022</div>
<div class="t" style="top:956.18px;font-size:24px;line-height:31px;color:#626262;font-family:'Liberation Sans', sans-serif;left:61.90px;">-</div>
<div class="t" style="top:956.18px;font-size:24px;line-height:31px;color:#626262;font-family:'Liberation Sans', sans-serif;left:76.80px;letter-spacing:0.531px;">07/07/2022</div>
<div class="t" style="top:956.18px;font-size:24px;line-height:31px;color:#626262;font-family:'Liberation Sans', sans-serif;left:210.80px;">:</div>
<div class="t" style="top:956.18px;font-size:24px;line-height:31px;color:#626262;font-family:'Liberation Sans', sans-serif;left:224.50px;">3</div>
<div class="t" style="top:956.18px;font-size:24px;line-height:31px;color:#626262;font-family:'Liberation Sans', sans-serif;left:243.00px;letter-spacing:0.297px;">jour(s)</div>
<div class="t" style="top:956.18px;font-size:24px;line-height:31px;color:#626262;font-family:'Liberation Sans', sans-serif;left:322.00px;letter-spacing:-0.204px;">ouvré(s)</div>
<div class="t" style="top:987.18px;font-size:24px;line-height:31px;color:#626262;font-family:'Liberation Sans', sans-serif;right:1876.50px;letter-spacing:-0.3px;">ur(s)</div>
<div class="t" style="top:987.18px;font-size:24px;line-height:31px;color:#626262;font-family:'Liberation Sans', sans-serif;left:54.30px;letter-spacing:-0.290px;">ouvré(s)</div>
<svg class="b" style="left:400px;top:690px;" width="560" height="400" viewBox="0 0 560 400"><path d="M46 30H515Q527 30 527 42V400H521.8V46Q521.8 40.2 516 40.2H45.4Q39.6 40.2 39.6 46V400H34V42Q34 30 46 30Z" fill="#b7b7b7"/><path d="M256 30L276 10H285L305 30Z" fill="#b7b7b7"/><path d="M273 23H287M280 16V30" stroke="#fff" stroke-width="4.5"/><path d="M35 166L15 186Q12 190 15 194L35 214Z" fill="#b7b7b7"/><path d="M20 190H33.5M26.8 183.2V196.8" stroke="#fff" stroke-width="4.2"/><path d="M526 165L545 185Q548 189 545 193L526 214Z" fill="#b7b7b7"/><path d="M526.5 189.4H540M533.2 182.6V196.2" stroke="#fff" stroke-width="4.2"/></svg>
<div class="b" style="left:440px;top:732.3px;width:427.5px;height:253.5px;background:#fff;border:3px solid #339966;border-radius:17px;"></div>
<svg class="b" style="left:650px;top:729px;" width="8" height="5" viewBox="0 0 8 5"><path d="M3.8 0V4" stroke="#339966" stroke-width="4.4" opacity="0.55"/></svg>
<div class="b" style="left:474px;top:936px;width:36px;height:36px;background:#00a2ff;"></div>
<div class="t" style="top:931.85px;font-size:34.5px;line-height:45px;color:#fff;font-family:'DejaVu Sans', sans-serif;font-weight:700;left:492.00px;transform:translateX(-50%);text-shadow:1px 1px 1px rgba(0,60,120,0.45);">2</div>
<svg class="b" style="left:518px;top:934px;" width="40" height="40" viewBox="0 0 40 40"><circle cx="19.8" cy="19.8" r="16.6" fill="#fff" stroke="#3c78d8" stroke-width="2.2"/></svg>
<div class="t" style="top:937.14px;font-size:27px;line-height:35px;color:#444;font-family:'DejaVu Sans', sans-serif;font-weight:700;left:571.90px;letter-spacing:0.294px;">Article de presse</div>
<svg class="b" style="left:877.8px;top:938.9px;" width="36.5" height="36.5" viewBox="0 0 38 36"><path d="M4.5 1.2H19.5L27.4 9.1V31Q27.4 34.2 24.2 34.2H4.5Q1.3 34.2 1.3 31V4.4Q1.3 1.2 4.5 1.2Z" fill="#fff" stroke="#8a8a8a" stroke-width="2"/><path d="M19 1.6L27 9.6H19Z" fill="#8a8a8a"/><path d="M5.4 10h12" stroke="#3b86d8" stroke-width="2"/><path d="M5.4 14.6h8" stroke="#5b9be0" stroke-width="1.8"/><path d="M5.4 19.4h14M5.4 24h9" stroke="#cfcfcf" stroke-width="1.6"/><path d="M19.6 35.2L21.6 29 31.2 19.4 35.4 23.6 25.8 33.2Z" fill="#4a8ad4" stroke="#fff" stroke-width="1"/><path d="M32 18.6L33.6 17Q34.6 16.2 35.6 17.2L36.6 18.2Q37.6 19.4 36.6 20.4L35 22Z" fill="#c98b3a"/></svg>
<div class="b" style="left:460.3px;top:979.5px;width:173px;height:60px;background:#fff;border:2px solid #339966;"></div>
<svg class="b" style="left:478px;top:990px;" width="30" height="26" viewBox="0 0 30 26"><circle cx="14" cy="9" r="6" fill="#c9c9c9" stroke="#858585" stroke-width="1.4"/><path d="M2 27Q2 16.6 14 16.6Q26 16.6 26 27" fill="none" stroke="#858585" stroke-width="1.6"/></svg>
<div class="t" style="top:990.28px;font-size:22px;line-height:29px;color:#1c1c1c;font-family:'Liberation Sans', sans-serif;left:525.00px;letter-spacing:0.630px;">R : Anne</div>
<div class="b" style="left:1296.4px;top:973.3px;width:49.4px;height:32px;background:#f5f5fa;border-radius:16px;"></div>
<svg class="b" style="left:1313px;top:979px;" width="17" height="21" viewBox="0 0 17 21"><path d="M8.5 1.2Q15.4 1.2 15.4 8Q15.4 12 8.5 19.6Q1.6 12 1.6 8Q1.6 1.2 8.5 1.2Z" fill="#c8c8c8" stroke="#7d7d7d" stroke-width="1.3"/><circle cx="8.5" cy="8" r="2.5" fill="#fff" stroke="#7d7d7d" stroke-width="1"/></svg>
</div></div>
<svg class="b" style="left:620px;top:765px;" width="170" height="150" viewBox="0 0 170 150"><defs><linearGradient id="npb" x1="0" y1="0" x2="0" y2="1"><stop offset="0" stop-color="#fff"/><stop offset="0.82" stop-color="#fff"/><stop offset="0.93" stop-color="#d8d8d8"/><stop offset="1" stop-color="#8a8a8a"/></linearGradient><linearGradient id="npl" x1="0" y1="0" x2="1" y2="0"><stop offset="0" stop-color="#8a8a8a"/><stop offset="0.4" stop-color="#e2e2e2"/><stop offset="1" stop-color="#b4b4b4"/></linearGradient><linearGradient id="sky" x1="0" y1="0" x2="0" y2="1"><stop offset="0" stop-color="#4f9ad8"/><stop offset="1" stop-color="#b5d8f2"/></linearGradient><filter id="bl" x="-10%" y="-10%" width="120%" height="120%"><feGaussianBlur stdDeviation="1.05"/></filter><filter id="bl2" x="-10%" y="-10%" width="120%" height="120%"><feGaussianBlur stdDeviation="2.2"/></filter></defs><path d="M12 136H160V141.5Q84 145 12 141.5Z" fill="#555" filter="url(#bl2)" opacity="0.4"/><g filter="url(#bl)"><path d="M7.6 18L17.4 9.6V139.4L7.6 133.4Z" fill="url(#npl)"/><path d="M7.8 133V18.4L16.6 10.4" fill="none" stroke="#5e5e5e" stroke-width="1.2"/><path d="M17 9.6H157.8V135Q157.8 139.4 153.4 139.4H17Z" fill="url(#npb)" stroke="#bdbdbd" stroke-width="0.9"/><path d="M8 133.6L17 139.6H153Q157.6 139.6 157.8 136" fill="none" stroke="#606060" stroke-width="1.8"/><rect x="25" y="19" width="122" height="28.5" fill="#a9bfc8"/><rect x="27.6" y="21.6" width="116.8" height="23.3" fill="#d3e0e5"/><rect x="25" y="55" width="46.4" height="32" fill="url(#sky)"/><circle cx="35.4" cy="62" r="3.2" fill="#fff" opacity="0.9"/><path d="M25 87V83L37 71 47 80 57 66 71.4 82V87Z" fill="#47566b"/><path d="M57 66L62 72 58 76 54 71Z" fill="#8c98a8"/><path d="M76 56.8H97M76 64H97M76 71.2H97M76 78.6H97M76 86H97M107 56.8H147M107 64H147M107 71.2H147M107 78.6H147M107 86H147M107 93.2H147M25 93.2H97M25 100.4H97M25 107.6H97M25 114.8H97" stroke="#3c3c3c" stroke-width="3.1" stroke-dasharray="5 0.9 7 0.7 3 0.8" opacity="0.85"/><rect x="107" y="99" width="40" height="17.4" fill="#5573ad"/><rect x="110" y="102" width="34" height="11.4" fill="#9cacd0"/></g></svg>
<div class="t" style="top:784.68px;font-size:22px;line-height:29px;color:#66747c;font-family:'Liberation Serif', serif;font-weight:700;left:653.00px;letter-spacing:1.125px;filter:blur(1px);opacity:0.8;">TRIBUNE</div>
<div class="b" style="left:1372px;top:162px;width:2px;height:870px;background:#fff;"></div>
<div class="b" style="left:1374px;top:161px;width:1px;height:872px;background:#aaa;"></div>
<div class="b" style="left:1375px;top:161px;width:2px;height:895px;background:#e9e9e9;"></div>
<div class="b" style="left:1377px;top:161px;width:3px;height:895px;background:linear-gradient(180deg,#e0e0e0,#d6d6d6 60%,#cdcdcd);"></div>
<div class="b" style="left:1380px;top:161px;width:507px;height:35px;background:#e6e6e6;"></div>
<div class="b" style="left:1380px;top:196px;width:507px;height:34px;background:#efefef;"></div>
<div class="b" style="left:1380px;top:230px;width:507px;height:826px;background:#f9f8f6;"></div>
<div class="t" style="top:167.56px;font-size:18.6px;line-height:24px;color:#4d4d4d;font-family:'Liberation Sans', sans-serif;left:1385.00px;letter-spacing:0.049px;">Index de la map</div>
<svg class="b" style="left:1872px;top:174px;" width="9" height="9" viewBox="0 0 9 9"><path d="M0.8 0.8L8.2 8.2M8.2 0.8L0.8 8.2" stroke="#555" stroke-width="1.2"/></svg>
<div class="b" style="left:1389px;top:203px;width:63px;height:20px;background:#c9c9c9;"></div>
<div class="t" style="top:205.04px;font-size:12px;line-height:16px;color:#555;font-family:'Liberation Sans', sans-serif;left:1392.30px;letter-spacing:-0.282px;">Marqueurs</div>
<div class="t" style="top:205.04px;font-size:12px;line-height:16px;color:#555;font-family:'Liberation Sans', sans-serif;left:1457.40px;letter-spacing:-0.719px;">Éléments</div>
<div class="t" style="top:205.76px;font-size:10.8px;line-height:14px;color:#3a3a3a;font-family:'Liberation Sans', sans-serif;font-weight:700;left:1729.60px;letter-spacing:-0.699px;">AJOUTER</div>
<svg class="b" style="left:1783.2px;top:206.9px;" width="12" height="12" viewBox="0 0 12 12"><path d="M0.2 6H11.8M6 0.2V11.8" stroke="#3a8a26" stroke-width="4.6"/><path d="M1 6H11M6 1V11" stroke="#62c046" stroke-width="3"/></svg>
<svg class="b" style="left:1802px;top:211px;" width="6" height="4" viewBox="0 0 6 4"><path d="M0 0.3H5.4L2.7 3.3Z" fill="#666"/></svg>
<div class="t" style="top:205.04px;font-size:12px;line-height:16px;color:#444;font-family:'Liberation Sans', sans-serif;left:1817.60px;letter-spacing:-0.216px;">Affichage</div>
<svg class="b" style="left:1873px;top:211px;" width="6" height="4" viewBox="0 0 6 4"><path d="M0 0.3H5.4L2.7 3.3Z" fill="#666"/></svg>
<div class="b" style="left:1386px;top:235px;width:496px;height:816px;background:#fff;border:1px solid #8c8c8c;"></div>
<div class="b" style="left:1411px;top:245px;width:21px;height:1px;background:#d6d6d6;"></div>
<div class="b" style="left:1498.3px;top:245px;width:357.70000000000005px;height:1px;background:#d6d6d6;"></div>
<div class="t" style="top:238.79px;font-size:11px;line-height:14px;color:#0066cc;font-family:'DejaVu Sans', sans-serif;font-weight:700;left:1434.20px;letter-spacing:-0.589px;">Priorité (5)</div>
<svg class="b" style="left:1395.0px;top:242.0px;" width="9" height="9" viewBox="0 0 9 9"><rect x="0.5" y="0.5" width="8" height="8" rx="1.2" fill="#fff" stroke="#8a8a8a" stroke-width="1"/><path d="M2.2 4.5H6.8" stroke="#3c50a0" stroke-width="1.1"/></svg>
<svg class="b" style="left:1860px;top:236.5px;" width="18" height="17" viewBox="0 0 18 17"><rect x="0.6" y="2.4" width="14.8" height="12.6" rx="1.6" fill="#fff" stroke="#777" stroke-width="1.1"/><path d="M0.6 4.2Q0.6 2.4 2.4 2.4H13.6Q15.4 2.4 15.4 4.2V5.6H0.6Z" fill="#f0963c"/><path d="M4 0.4V3.2M12 0.4V3.2" stroke="#777" stroke-width="1.2"/><path d="M5 9.8L7.2 12 11 7.6" fill="none" stroke="#3f9a30" stroke-width="1.5"/><path d="M11.6 13.6H17.6M14.6 10.6V16.6" stroke="#3f9a30" stroke-width="1.3"/></svg>
<svg class="b" style="left:1416.0px;top:260.0px;" width="9" height="9" viewBox="0 0 9 9"><rect x="0.5" y="0.5" width="8" height="8" rx="1.2" fill="#fff" stroke="#8a8a8a" stroke-width="1"/><path d="M2.2 4.5H6.8" stroke="#3c50a0" stroke-width="1.1"/><path d="M4.5 2.2V6.8" stroke="#3c50a0" stroke-width="1.1"/></svg>
<svg class="b" style="left:1434px;top:255px;" width="16" height="16" viewBox="0 0 16 16"><rect x="0.5" y="0.5" width="15" height="15" rx="1.6" fill="#e00000" stroke="#d40000" stroke-width="1"/></svg><div class="t" style="top:254.35px;font-size:14px;line-height:18px;color:#fff;font-family:'DejaVu Sans', sans-serif;font-weight:700;left:1442.00px;transform:translateX(-50%);text-shadow:0 0 1px rgba(0,0,0,.55);">1</div>
<div class="t" style="top:256.49px;font-size:11px;line-height:14px;color:#000;font-family:'Liberation Sans', sans-serif;left:1454.30px;letter-spacing:-0.056px;">Priorité 1 (2)</div>
<svg class="b" style="left:1416.0px;top:278.0px;" width="9" height="9" viewBox="0 0 9 9"><rect x="0.5" y="0.5" width="8" height="8" rx="1.2" fill="#fff" stroke="#8a8a8a" stroke-width="1"/><path d="M2.2 4.5H6.8" stroke="#3c50a0" stroke-width="1.1"/><path d="M4.5 2.2V6.8" stroke="#3c50a0" stroke-width="1.1"/></svg>
<svg class="b" style="left:1434px;top:273px;" width="16" height="16" viewBox="0 0 16 16"><rect x="0.5" y="0.5" width="15" height="15" rx="1.6" fill="#1ea0ff" stroke="#1496f4" stroke-width="1"/></svg><div class="t" style="top:272.35px;font-size:14px;line-height:18px;color:#fff;font-family:'DejaVu Sans', sans-serif;font-weight:700;left:1442.00px;transform:translateX(-50%);text-shadow:0 0 1px rgba(0,0,0,.55);">2</div>
<div class="t" style="top:274.49px;font-size:11px;line-height:14px;color:#000;font-family:'Liberation Sans', sans-serif;left:1454.30px;letter-spacing:-0.056px;">Priorité 2 (3)</div>
<svg class="b" style="left:1434px;top:291px;" width="16" height="16" viewBox="0 0 16 16"><rect x="0.5" y="0.5" width="15" height="15" rx="1.6" fill="#6cbb1c" stroke="#60ae14" stroke-width="1"/></svg><div class="t" style="top:290.35px;font-size:14px;line-height:18px;color:#fff;font-family:'DejaVu Sans', sans-serif;font-weight:700;left:1442.00px;transform:translateX(-50%);text-shadow:0 0 1px rgba(0,0,0,.55);">3</div>
<div class="t" style="top:292.49px;font-size:11px;line-height:14px;color:#000;font-family:'Liberation Sans', sans-serif;left:1454.30px;letter-spacing:-0.015px;">Priorité 3</div>
<svg class="b" style="left:1434px;top:309px;" width="16" height="16" viewBox="0 0 16 16"><rect x="0.5" y="0.5" width="15" height="15" rx="1.6" fill="#ffb400" stroke="#f2a800" stroke-width="1"/></svg><div class="t" style="top:308.35px;font-size:14px;line-height:18px;color:#fff;font-family:'DejaVu Sans', sans-serif;font-weight:700;left:1442.00px;transform:translateX(-50%);text-shadow:0 0 1px rgba(0,0,0,.55);">4</div>
<div class="t" style="top:310.49px;font-size:11px;line-height:14px;color:#000;font-family:'Liberation Sans', sans-serif;left:1454.30px;letter-spacing:-0.015px;">Priorité 4</div>
<svg class="b" style="left:1434px;top:327px;" width="16" height="16" viewBox="0 0 16 16"><rect x="0.5" y="0.5" width="15" height="15" rx="1.6" fill="#a050f0" stroke="#9444e6" stroke-width="1"/></svg><div class="t" style="top:326.35px;font-size:14px;line-height:18px;color:#fff;font-family:'DejaVu Sans', sans-serif;font-weight:700;left:1442.00px;transform:translateX(-50%);text-shadow:0 0 1px rgba(0,0,0,.55);">5</div>
<div class="t" style="top:328.49px;font-size:11px;line-height:14px;color:#000;font-family:'Liberation Sans', sans-serif;left:1454.30px;letter-spacing:-0.015px;">Priorité 5</div>
<svg class="b" style="left:1434px;top:345px;" width="16" height="16" viewBox="0 0 16 16"><rect x="0.5" y="0.5" width="15" height="15" rx="1.6" fill="#808080" stroke="#4a4a4a" stroke-width="1"/></svg><div class="t" style="top:344.35px;font-size:14px;line-height:18px;color:#fff;font-family:'DejaVu Sans', sans-serif;font-weight:700;left:1442.00px;transform:translateX(-50%);text-shadow:0 0 1px rgba(0,0,0,.55);">6</div>
<div class="t" style="top:346.49px;font-size:11px;line-height:14px;color:#000;font-family:'Liberation Sans', sans-serif;left:1454.30px;letter-spacing:-0.015px;">Priorité 6</div>
<svg class="b" style="left:1434px;top:363px;" width="16" height="16" viewBox="0 0 16 16"><rect x="0.5" y="0.5" width="15" height="15" rx="1.6" fill="#808080" stroke="#4a4a4a" stroke-width="1"/></svg><div class="t" style="top:362.35px;font-size:14px;line-height:18px;color:#fff;font-family:'DejaVu Sans', sans-serif;font-weight:700;left:1442.00px;transform:translateX(-50%);text-shadow:0 0 1px rgba(0,0,0,.55);">7</div>
<div class="t" style="top:364.49px;font-size:11px;line-height:14px;color:#000;font-family:'Liberation Sans', sans-serif;left:1454.30px;letter-spacing:-0.015px;">Priorité 7</div>
<svg class="b" style="left:1434px;top:381px;" width="16" height="16" viewBox="0 0 16 16"><rect x="0.5" y="0.5" width="15" height="15" rx="1.6" fill="#808080" stroke="#4a4a4a" stroke-width="1"/></svg><div class="t" style="top:380.35px;font-size:14px;line-height:18px;color:#fff;font-family:'DejaVu Sans', sans-serif;font-weight:700;left:1442.00px;transform:translateX(-50%);text-shadow:0 0 1px rgba(0,0,0,.55);">8</div>
<div class="t" style="top:382.49px;font-size:11px;line-height:14px;color:#000;font-family:'Liberation Sans', sans-serif;left:1454.30px;letter-spacing:-0.015px;">Priorité 8</div>
<svg class="b" style="left:1434px;top:399px;" width="16" height="16" viewBox="0 0 16 16"><rect x="0.5" y="0.5" width="15" height="15" rx="1.6" fill="#808080" stroke="#4a4a4a" stroke-width="1"/></svg><div class="t" style="top:398.35px;font-size:14px;line-height:18px;color:#fff;font-family:'DejaVu Sans', sans-serif;font-weight:700;left:1442.00px;transform:translateX(-50%);text-shadow:0 0 1px rgba(0,0,0,.55);">9</div>
<div class="t" style="top:400.49px;font-size:11px;line-height:14px;color:#000;font-family:'Liberation Sans', sans-serif;left:1454.30px;letter-spacing:-0.084px;">Prioriété 9</div>
<div class="b" style="left:1411px;top:425px;width:21px;height:1px;background:#d6d6d6;"></div>
<div class="b" style="left:1523.3px;top:425px;width:332.70000000000005px;height:1px;background:#d6d6d6;"></div>
<div class="t" style="top:418.79px;font-size:11px;line-height:14px;color:#0066cc;font-family:'DejaVu Sans', sans-serif;font-weight:700;left:1434.20px;letter-spacing:-0.629px;">Progression (9)</div>
<svg class="b" style="left:1395.0px;top:422.0px;" width="9" height="9" viewBox="0 0 9 9"><rect x="0.5" y="0.5" width="8" height="8" rx="1.2" fill="#fff" stroke="#8a8a8a" stroke-width="1"/><path d="M2.2 4.5H6.8" stroke="#3c50a0" stroke-width="1.1"/></svg>
<svg class="b" style="left:1860px;top:416.5px;" width="18" height="17" viewBox="0 0 18 17"><rect x="0.6" y="2.4" width="14.8" height="12.6" rx="1.6" fill="#fff" stroke="#777" stroke-width="1.1"/><path d="M0.6 4.2Q0.6 2.4 2.4 2.4H13.6Q15.4 2.4 15.4 4.2V5.6H0.6Z" fill="#f0963c"/><path d="M4 0.4V3.2M12 0.4V3.2" stroke="#777" stroke-width="1.2"/><path d="M5 9.8L7.2 12 11 7.6" fill="none" stroke="#3f9a30" stroke-width="1.5"/><path d="M11.6 13.6H17.6M14.6 10.6V16.6" stroke="#3f9a30" stroke-width="1.3"/></svg>
<svg class="b" style="left:1416.0px;top:440.0px;" width="9" height="9" viewBox="0 0 9 9"><rect x="0.5" y="0.5" width="8" height="8" rx="1.2" fill="#fff" stroke="#8a8a8a" stroke-width="1"/><path d="M2.2 4.5H6.8" stroke="#3c50a0" stroke-width="1.1"/><path d="M4.5 2.2V6.8" stroke="#3c50a0" stroke-width="1.1"/></svg>
<svg class="b" style="left:1434px;top:435px;" width="16" height="16" viewBox="0 0 16 16"><circle cx="8" cy="8" r="7.1" fill="#fff"/><circle cx="8" cy="8" r="7.1" fill="none" stroke="#2f7de8" stroke-width="1.4"/></svg>
<div class="t" style="top:436.49px;font-size:11px;line-height:14px;color:#000;font-family:'Liberation Sans', sans-serif;left:1454.30px;letter-spacing:-0.310px;">Non commencé (5)</div>
<svg class="b" style="left:1416.0px;top:458.0px;" width="9" height="9" viewBox="0 0 9 9"><rect x="0.5" y="0.5" width="8" height="8" rx="1.2" fill="#fff" stroke="#8a8a8a" stroke-width="1"/><path d="M2.2 4.5H6.8" stroke="#3c50a0" stroke-width="1.1"/><path d="M4.5 2.2V6.8" stroke="#3c50a0" stroke-width="1.1"/></svg>
<svg class="b" style="left:1434px;top:453px;" width="16" height="16" viewBox="0 0 16 16"><circle cx="8" cy="8" r="7.1" fill="#fff"/><path d="M8 8V0.8A7.2 7.2 0 0 1 15.2 8Z" fill="#3d8bfd"/><circle cx="8" cy="8" r="7.1" fill="none" stroke="#2f7de8" stroke-width="1.4"/></svg>
<div class="t" style="top:454.49px;font-size:11px;line-height:14px;color:#000;font-family:'Liberation Sans', sans-serif;left:1454.30px;letter-spacing:0.037px;">Achevé à 25% (1)</div>
<svg class="b" style="left:1434px;top:471px;" width="16" height="16" viewBox="0 0 16 16"><circle cx="8" cy="8" r="7.1" fill="#fff"/><path d="M8 0.8A7.2 7.2 0 0 1 8 15.2Z" fill="#3d8bfd"/><circle cx="8" cy="8" r="7.1" fill="none" stroke="#2f7de8" stroke-width="1.4"/></svg>
<div class="t" style="top:472.49px;font-size:11px;line-height:14px;color:#000;font-family:'Liberation Sans', sans-serif;left:1454.30px;letter-spacing:0.006px;">Achevé à 50%</div>
<svg class="b" style="left:1434px;top:489px;" width="16" height="16" viewBox="0 0 16 16"><circle cx="8" cy="8" r="7.1" fill="#fff"/><path d="M8 8H0.8A7.2 7.2 0 1 0 8 0.8Z" fill="#3d8bfd"/><circle cx="8" cy="8" r="7.1" fill="none" stroke="#2f7de8" stroke-width="1.4"/></svg>
<div class="t" style="top:490.49px;font-size:11px;line-height:14px;color:#000;font-family:'Liberation Sans', sans-serif;left:1454.30px;letter-spacing:-0.015px;">A présenter en réunion</div>
<svg class="b" style="left:1416.0px;top:512.0px;" width="9" height="9" viewBox="0 0 9 9"><rect x="0.5" y="0.5" width="8" height="8" rx="1.2" fill="#fff" stroke="#8a8a8a" stroke-width="1"/><path d="M2.2 4.5H6.8" stroke="#3c50a0" stroke-width="1.1"/><path d="M4.5 2.2V6.8" stroke="#3c50a0" stroke-width="1.1"/></svg>
<svg class="b" style="left:1434px;top:507px;" width="16" height="16" viewBox="0 0 16 16"><circle cx="8" cy="8" r="7.6" fill="#2fa31e"/><path d="M4.2 8.2L7 11 12 5.4" fill="none" stroke="#fff" stroke-width="2.2"/></svg>
<div class="t" style="top:508.49px;font-size:11px;line-height:14px;color:#000;font-family:'Liberation Sans', sans-serif;left:1454.30px;letter-spacing:-0.082px;">Tâche achevée (1)</div>
<svg class="b" style="left:1416.0px;top:530.0px;" width="9" height="9" viewBox="0 0 9 9"><rect x="0.5" y="0.5" width="8" height="8" rx="1.2" fill="#fff" stroke="#8a8a8a" stroke-width="1"/><path d="M2.2 4.5H6.8" stroke="#3c50a0" stroke-width="1.1"/><path d="M4.5 2.2V6.8" stroke="#3c50a0" stroke-width="1.1"/></svg>
<svg class="b" style="left:1434px;top:525px;" width="16" height="16" viewBox="0 0 16 16"><circle cx="8" cy="8" r="7.1" fill="#fff"/><path d="M8 8V0.8A7.2 7.2 0 0 1 12.2 2.2Z" fill="#3d8bfd"/><circle cx="8" cy="8" r="7.1" fill="none" stroke="#2f7de8" stroke-width="1.4"/></svg>
<div class="t" style="top:526.49px;font-size:11px;line-height:14px;color:#808080;font-family:'Liberation Sans', sans-serif;left:1454.30px;letter-spacing:-0.164px;">Nom de marqueur (2)</div>
<div class="b" style="left:1411px;top:551px;width:21px;height:1px;background:#d6d6d6;"></div>
<div class="b" style="left:1520.9px;top:551px;width:335.0999999999999px;height:1px;background:#d6d6d6;"></div>
<div class="t" style="top:544.79px;font-size:11px;line-height:14px;color:#0066cc;font-family:'DejaVu Sans', sans-serif;font-weight:700;left:1434.20px;letter-spacing:-0.577px;">Ressources (6)</div>
<svg class="b" style="left:1395.0px;top:548.0px;" width="9" height="9" viewBox="0 0 9 9"><rect x="0.5" y="0.5" width="8" height="8" rx="1.2" fill="#fff" stroke="#8a8a8a" stroke-width="1"/><path d="M2.2 4.5H6.8" stroke="#3c50a0" stroke-width="1.1"/></svg>
<svg class="b" style="left:1860px;top:542.5px;" width="18" height="17" viewBox="0 0 18 17"><rect x="0.6" y="2.4" width="14.8" height="12.6" rx="1.6" fill="#fff" stroke="#777" stroke-width="1.1"/><path d="M0.6 4.2Q0.6 2.4 2.4 2.4H13.6Q15.4 2.4 15.4 4.2V5.6H0.6Z" fill="#f0963c"/><path d="M4 0.4V3.2M12 0.4V3.2" stroke="#777" stroke-width="1.2"/><path d="M5 9.8L7.2 12 11 7.6" fill="none" stroke="#3f9a30" stroke-width="1.5"/><path d="M11.6 13.6H17.6M14.6 10.6V16.6" stroke="#3f9a30" stroke-width="1.3"/></svg>
<svg class="b" style="left:1416.0px;top:566.0px;" width="9" height="9" viewBox="0 0 9 9"><rect x="0.5" y="0.5" width="8" height="8" rx="1.2" fill="#fff" stroke="#8a8a8a" stroke-width="1"/><path d="M2.2 4.5H6.8" stroke="#3c50a0" stroke-width="1.1"/><path d="M4.5 2.2V6.8" stroke="#3c50a0" stroke-width="1.1"/></svg>
<svg class="b" style="left:1434px;top:561px;" width="16" height="16" viewBox="0 0 16 16"><circle cx="8" cy="5" r="2.9" fill="none" stroke="#8a8a8a" stroke-width="1.1"/><path d="M2.6 13.6Q2.6 9 8 9Q13.4 9 13.4 13.6Z" fill="none" stroke="#8a8a8a" stroke-width="1.1" stroke-linejoin="round"/></svg>
<div class="t" style="top:562.49px;font-size:11px;line-height:14px;color:#000;font-family:'Liberation Sans', sans-serif;left:1454.30px;letter-spacing:-0.004px;">Alexandre (4)</div>
<svg class="b" style="left:1416.0px;top:584.0px;" width="9" height="9" viewBox="0 0 9 9"><rect x="0.5" y="0.5" width="8" height="8" rx="1.2" fill="#fff" stroke="#8a8a8a" stroke-width="1"/><path d="M2.2 4.5H6.8" stroke="#3c50a0" stroke-width="1.1"/><path d="M4.5 2.2V6.8" stroke="#3c50a0" stroke-width="1.1"/></svg>
<svg class="b" style="left:1434px;top:579px;" width="16" height="16" viewBox="0 0 16 16"><circle cx="8" cy="5" r="2.9" fill="none" stroke="#8a8a8a" stroke-width="1.1"/><path d="M2.6 13.6Q2.6 9 8 9Q13.4 9 13.4 13.6Z" fill="none" stroke="#8a8a8a" stroke-width="1.1" stroke-linejoin="round"/></svg>
<div class="t" style="top:580.49px;font-size:11px;line-height:14px;color:#000;font-family:'Liberation Sans', sans-serif;left:1454.30px;letter-spacing:-0.029px;">Anne (1)</div>
<svg class="b" style="left:1434px;top:597px;" width="16" height="16" viewBox="0 0 16 16"><circle cx="8" cy="5" r="2.9" fill="none" stroke="#8a8a8a" stroke-width="1.1"/><path d="M2.6 13.6Q2.6 9 8 9Q13.4 9 13.4 13.6Z" fill="none" stroke="#8a8a8a" stroke-width="1.1" stroke-linejoin="round"/></svg>
<div class="t" style="top:598.49px;font-size:11px;line-height:14px;color:#000;font-family:'Liberation Sans', sans-serif;left:1454.30px;letter-spacing:-0.006px;">Aurore</div>
<svg class="b" style="left:1434px;top:615px;" width="16" height="16" viewBox="0 0 16 16"><circle cx="8" cy="5" r="2.9" fill="none" stroke="#8a8a8a" stroke-width="1.1"/><path d="M2.6 13.6Q2.6 9 8 9Q13.4 9 13.4 13.6Z" fill="none" stroke="#8a8a8a" stroke-width="1.1" stroke-linejoin="round"/></svg>
<div class="t" style="top:616.49px;font-size:11px;line-height:14px;color:#000;font-family:'Liberation Sans', sans-serif;left:1454.30px;letter-spacing:-0.261px;">Clément</div>
<svg class="b" style="left:1416.0px;top:638.0px;" width="9" height="9" viewBox="0 0 9 9"><rect x="0.5" y="0.5" width="8" height="8" rx="1.2" fill="#fff" stroke="#8a8a8a" stroke-width="1"/><path d="M2.2 4.5H6.8" stroke="#3c50a0" stroke-width="1.1"/><path d="M4.5 2.2V6.8" stroke="#3c50a0" stroke-width="1.1"/></svg>
<svg class="b" style="left:1434px;top:633px;" width="16" height="16" viewBox="0 0 16 16"><circle cx="8" cy="5" r="2.9" fill="none" stroke="#8a8a8a" stroke-width="1.1"/><path d="M2.6 13.6Q2.6 9 8 9Q13.4 9 13.4 13.6Z" fill="none" stroke="#8a8a8a" stroke-width="1.1" stroke-linejoin="round"/></svg>
<div class="t" style="top:634.49px;font-size:11px;line-height:14px;color:#000;font-family:'Liberation Sans', sans-serif;left:1454.30px;letter-spacing:-0.106px;">Cyrille (1)</div>
<svg class="b" style="left:1434px;top:651px;" width="16" height="16" viewBox="0 0 16 16"><circle cx="8" cy="5" r="2.9" fill="none" stroke="#8a8a8a" stroke-width="1.1"/><path d="M2.6 13.6Q2.6 9 8 9Q13.4 9 13.4 13.6Z" fill="none" stroke="#8a8a8a" stroke-width="1.1" stroke-linejoin="round"/></svg>
<div class="t" style="top:652.49px;font-size:11px;line-height:14px;color:#000;font-family:'Liberation Sans', sans-serif;left:1454.30px;letter-spacing:-0.227px;">Jean Pierre</div>
<svg class="b" style="left:1434px;top:669px;" width="16" height="16" viewBox="0 0 16 16"><circle cx="8" cy="5" r="2.9" fill="none" stroke="#8a8a8a" stroke-width="1.1"/><path d="M2.6 13.6Q2.6 9 8 9Q13.4 9 13.4 13.6Z" fill="none" stroke="#8a8a8a" stroke-width="1.1" stroke-linejoin="round"/></svg>
<div class="t" style="top:670.49px;font-size:11px;line-height:14px;color:#000;font-family:'Liberation Sans', sans-serif;left:1454.30px;letter-spacing:-0.385px;">Marina</div>
<svg class="b" style="left:1434px;top:687px;" width="16" height="16" viewBox="0 0 16 16"><circle cx="8" cy="5" r="2.9" fill="none" stroke="#8a8a8a" stroke-width="1.1"/><path d="M2.6 13.6Q2.6 9 8 9Q13.4 9 13.4 13.6Z" fill="none" stroke="#8a8a8a" stroke-width="1.1" stroke-linejoin="round"/></svg>
<div class="t" style="top:688.49px;font-size:11px;line-height:14px;color:#000;font-family:'Liberation Sans', sans-serif;left:1454.30px;letter-spacing:-0.131px;">Martine</div>
<svg class="b" style="left:1434px;top:705px;" width="16" height="16" viewBox="0 0 16 16"><circle cx="8" cy="5" r="2.9" fill="none" stroke="#8a8a8a" stroke-width="1.1"/><path d="M2.6 13.6Q2.6 9 8 9Q13.4 9 13.4 13.6Z" fill="none" stroke="#8a8a8a" stroke-width="1.1" stroke-linejoin="round"/></svg>
<div class="t" style="top:706.49px;font-size:11px;line-height:14px;color:#000;font-family:'Liberation Sans', sans-serif;left:1454.30px;letter-spacing:-0.223px;">Nathalie</div>
<div class="b" style="left:1411px;top:731px;width:21px;height:1px;background:#d6d6d6;"></div>
<div class="b" style="left:1534.5px;top:731px;width:321.5px;height:1px;background:#d6d6d6;"></div>
<div class="t" style="top:724.79px;font-size:11px;line-height:14px;color:#0066cc;font-family:'DejaVu Sans', sans-serif;font-weight:700;left:1434.20px;letter-spacing:-0.688px;">Balises générales</div>
<svg class="b" style="left:1859px;top:722px;" width="17" height="17" viewBox="0 0 17 17"><g transform="rotate(-42 8.5 8.5)"><path d="M0.8 4.4H11.6L16.6 8.5 11.6 12.6H0.8Z" fill="#dceafa" stroke="#2f7fd6" stroke-width="2" stroke-linejoin="round"/><circle cx="12" cy="8.5" r="1.2" fill="#fff" stroke="#2f7fd6" stroke-width="0.8"/></g></svg>
<div class="b" style="left:1411px;top:749px;width:21px;height:1px;background:#d6d6d6;"></div>
<div class="b" style="left:1497.5px;top:749px;width:358.5px;height:1px;background:#d6d6d6;"></div>
<div class="t" style="top:742.79px;font-size:11px;line-height:14px;color:#0066cc;font-family:'DejaVu Sans', sans-serif;font-weight:700;left:1434.20px;letter-spacing:-0.651px;">Catégories</div>
<svg class="b" style="left:1859px;top:740px;" width="17" height="17" viewBox="0 0 17 17"><g transform="rotate(-42 8.5 8.5)"><path d="M0.8 4.4H11.6L16.6 8.5 11.6 12.6H0.8Z" fill="#dceafa" stroke="#2f7fd6" stroke-width="2" stroke-linejoin="round"/><circle cx="12" cy="8.5" r="1.2" fill="#fff" stroke="#2f7fd6" stroke-width="0.8"/></g></svg>
<div class="b" style="left:1411px;top:767px;width:21px;height:1px;background:#d6d6d6;"></div>
<div class="b" style="left:1478.7px;top:767px;width:377.29999999999995px;height:1px;background:#d6d6d6;"></div>
<div class="t" style="top:760.79px;font-size:11px;line-height:14px;color:#0066cc;font-family:'DejaVu Sans', sans-serif;font-weight:700;left:1434.20px;letter-spacing:-0.589px;">Service</div>
<svg class="b" style="left:1859px;top:758px;" width="17" height="17" viewBox="0 0 17 17"><g transform="rotate(-42 8.5 8.5)"><path d="M0.8 4.4H11.6L16.6 8.5 11.6 12.6H0.8Z" fill="#dceafa" stroke="#2f7fd6" stroke-width="2" stroke-linejoin="round"/><circle cx="12" cy="8.5" r="1.2" fill="#fff" stroke="#2f7fd6" stroke-width="0.8"/></g></svg>
<div class="b" style="left:1411px;top:785px;width:21px;height:1px;background:#d6d6d6;"></div>
<div class="b" style="left:1501.7px;top:785px;width:354.29999999999995px;height:1px;background:#d6d6d6;"></div>
<div class="t" style="top:778.79px;font-size:11px;line-height:14px;color:#0066cc;font-family:'DejaVu Sans', sans-serif;font-weight:700;left:1434.20px;letter-spacing:-0.698px;">Émoticônes</div>
<svg class="b" style="left:1395.0px;top:782.0px;" width="9" height="9" viewBox="0 0 9 9"><rect x="0.5" y="0.5" width="8" height="8" rx="1.2" fill="#fff" stroke="#8a8a8a" stroke-width="1"/><path d="M2.2 4.5H6.8" stroke="#3c50a0" stroke-width="1.1"/><path d="M4.5 2.2V6.8" stroke="#3c50a0" stroke-width="1.1"/></svg>
<svg class="b" style="left:1859px;top:777px;" width="18" height="18" viewBox="0 0 18 18"><rect x="0.5" y="0.5" width="9.6" height="9.6" rx="1.6" fill="#c2323d" stroke="#a3222c" stroke-width="0.8"/><path d="M4 3.8L5.6 2.8V7.8" fill="none" stroke="#fff" stroke-width="1.3"/><circle cx="11.6" cy="11.4" r="5.8" fill="#6cab5a" stroke="#4f9a40" stroke-width="0.9"/><path d="M8.8 11.6L10.9 13.6 14.4 9.6" fill="none" stroke="#fff" stroke-width="1.6"/></svg>
<div class="b" style="left:1411px;top:803px;width:21px;height:1px;background:#d6d6d6;"></div>
<div class="b" style="left:1478.7px;top:803px;width:377.29999999999995px;height:1px;background:#d6d6d6;"></div>
<div class="t" style="top:796.79px;font-size:11px;line-height:14px;color:#0066cc;font-family:'DejaVu Sans', sans-serif;font-weight:700;left:1434.20px;letter-spacing:-0.818px;">Flèches</div>
<svg class="b" style="left:1395.0px;top:800.0px;" width="9" height="9" viewBox="0 0 9 9"><rect x="0.5" y="0.5" width="8" height="8" rx="1.2" fill="#fff" stroke="#8a8a8a" stroke-width="1"/><path d="M2.2 4.5H6.8" stroke="#3c50a0" stroke-width="1.1"/><path d="M4.5 2.2V6.8" stroke="#3c50a0" stroke-width="1.1"/></svg>
<svg class="b" style="left:1859px;top:795px;" width="18" height="18" viewBox="0 0 18 18"><rect x="0.5" y="0.5" width="9.6" height="9.6" rx="1.6" fill="#c2323d" stroke="#a3222c" stroke-width="0.8"/><path d="M4 3.8L5.6 2.8V7.8" fill="none" stroke="#fff" stroke-width="1.3"/><circle cx="11.6" cy="11.4" r="5.8" fill="#6cab5a" stroke="#4f9a40" stroke-width="0.9"/><path d="M8.8 11.6L10.9 13.6 14.4 9.6" fill="none" stroke="#fff" stroke-width="1.6"/></svg>
<div class="b" style="left:1411px;top:821px;width:21px;height:1px;background:#d6d6d6;"></div>
<div class="b" style="left:1501.7px;top:821px;width:354.29999999999995px;height:1px;background:#d6d6d6;"></div>
<div class="t" style="top:814.79px;font-size:11px;line-height:14px;color:#0066cc;font-family:'DejaVu Sans', sans-serif;font-weight:700;left:1434.20px;letter-spacing:-0.485px;">Indicateurs</div>
<svg class="b" style="left:1395.0px;top:818.0px;" width="9" height="9" viewBox="0 0 9 9"><rect x="0.5" y="0.5" width="8" height="8" rx="1.2" fill="#fff" stroke="#8a8a8a" stroke-width="1"/><path d="M2.2 4.5H6.8" stroke="#3c50a0" stroke-width="1.1"/><path d="M4.5 2.2V6.8" stroke="#3c50a0" stroke-width="1.1"/></svg>
<svg class="b" style="left:1859px;top:813px;" width="18" height="18" viewBox="0 0 18 18"><rect x="0.5" y="0.5" width="9.6" height="9.6" rx="1.6" fill="#c2323d" stroke="#a3222c" stroke-width="0.8"/><path d="M4 3.8L5.6 2.8V7.8" fill="none" stroke="#fff" stroke-width="1.3"/><circle cx="11.6" cy="11.4" r="5.8" fill="#6cab5a" stroke="#4f9a40" stroke-width="0.9"/><path d="M8.8 11.6L10.9 13.6 14.4 9.6" fill="none" stroke="#fff" stroke-width="1.6"/></svg>
<div class="b" style="left:1411px;top:839px;width:21px;height:1px;background:#d6d6d6;"></div>
<div class="b" style="left:1509.5px;top:839px;width:346.5px;height:1px;background:#d6d6d6;"></div>
<div class="t" style="top:832.79px;font-size:11px;line-height:14px;color:#0066cc;font-family:'DejaVu Sans', sans-serif;font-weight:700;left:1434.20px;letter-spacing:-0.626px;">Icone unique</div>
<svg class="b" style="left:1395.0px;top:836.0px;" width="9" height="9" viewBox="0 0 9 9"><rect x="0.5" y="0.5" width="8" height="8" rx="1.2" fill="#fff" stroke="#8a8a8a" stroke-width="1"/><path d="M2.2 4.5H6.8" stroke="#3c50a0" stroke-width="1.1"/><path d="M4.5 2.2V6.8" stroke="#3c50a0" stroke-width="1.1"/></svg>
<svg class="b" style="left:1859px;top:831px;" width="18" height="18" viewBox="0 0 18 18"><rect x="0.5" y="0.5" width="9.6" height="9.6" rx="1.6" fill="#c2323d" stroke="#a3222c" stroke-width="0.8"/><path d="M4 3.8L5.6 2.8V7.8" fill="none" stroke="#fff" stroke-width="1.3"/><circle cx="11.6" cy="11.4" r="5.8" fill="#6cab5a" stroke="#4f9a40" stroke-width="0.9"/><path d="M8.8 11.6L10.9 13.6 14.4 9.6" fill="none" stroke="#fff" stroke-width="1.6"/></svg>
<div class="b" style="left:1411px;top:857px;width:21px;height:1px;background:#d6d6d6;"></div>
<div class="b" style="left:1523.5px;top:857px;width:332.5px;height:1px;background:#d6d6d6;"></div>
<div class="t" style="top:850.79px;font-size:11px;line-height:14px;color:#0066cc;font-family:'DejaVu Sans', sans-serif;font-weight:700;left:1434.20px;letter-spacing:-0.608px;">Périodicité (14)</div>
<svg class="b" style="left:1395.0px;top:854.0px;" width="9" height="9" viewBox="0 0 9 9"><rect x="0.5" y="0.5" width="8" height="8" rx="1.2" fill="#fff" stroke="#8a8a8a" stroke-width="1"/><path d="M2.2 4.5H6.8" stroke="#3c50a0" stroke-width="1.1"/><path d="M4.5 2.2V6.8" stroke="#3c50a0" stroke-width="1.1"/></svg>
<svg class="b" style="left:1859.5px;top:848px;" width="17" height="17" viewBox="0 0 17 17"><path d="M15.8 1.2L6.6 10.2" stroke="#3f7fd0" stroke-width="1.8"/><path d="M7.4 9.2L9 10.8Q6.4 15.2 1.2 15.6Q3.4 13.6 4 11.4Q4.8 9.2 7.4 9.2Z" fill="#e8a33a" stroke="#c88420" stroke-width="0.6"/></svg>
<div class="b" style="left:1411px;top:875px;width:21px;height:1px;background:#d6d6d6;"></div>
<div class="b" style="left:1558.5px;top:875px;width:297.5px;height:1px;background:#d6d6d6;"></div>
<div class="t" style="top:868.79px;font-size:11px;line-height:14px;color:#0066cc;font-family:'DejaVu Sans', sans-serif;font-weight:700;left:1434.20px;letter-spacing:-0.666px;">Couleurs de police (1)</div>
<svg class="b" style="left:1395.0px;top:872.0px;" width="9" height="9" viewBox="0 0 9 9"><rect x="0.5" y="0.5" width="8" height="8" rx="1.2" fill="#fff" stroke="#8a8a8a" stroke-width="1"/><path d="M2.2 4.5H6.8" stroke="#3c50a0" stroke-width="1.1"/><path d="M4.5 2.2V6.8" stroke="#3c50a0" stroke-width="1.1"/></svg>
<svg class="b" style="left:1859.5px;top:866px;" width="17" height="17" viewBox="0 0 17 17"><path d="M15.8 1.2L6.6 10.2" stroke="#3f7fd0" stroke-width="1.8"/><path d="M7.4 9.2L9 10.8Q6.4 15.2 1.2 15.6Q3.4 13.6 4 11.4Q4.8 9.2 7.4 9.2Z" fill="#e8a33a" stroke="#c88420" stroke-width="0.6"/></svg>
<div class="b" style="left:1887px;top:161px;width:31px;height:895px;background:#ececec;"></div>
<div class="b" style="left:1887px;top:161px;width:1px;height:895px;background:#aaa;"></div>
<div class="b" style="left:1916px;top:161px;width:2px;height:895px;background:#f6f6f6;"></div>
<svg class="b" style="left:1888px;top:175px;" width="28" height="30" viewBox="0 0 28 30"><path d="M0.5 0.5H22L27.5 6V29H0.5Z" fill="#e4e4e4" stroke="#c2c2c2" stroke-width="1"/></svg>
<svg class="b" style="left:1888px;top:205px;" width="28" height="30" viewBox="0 0 28 30"><path d="M-1 0.5H22L27.5 6V29H-1Z" fill="#f9f8f6"/><path d="M0 0.5H22L27.5 6V29H0" fill="none" stroke="#c2c2c2" stroke-width="1"/></svg>
<svg class="b" style="left:1888px;top:235px;" width="28" height="30" viewBox="0 0 28 30"><path d="M0.5 0.5H22L27.5 6V29H0.5Z" fill="#f2f2f2" stroke="#c2c2c2" stroke-width="1"/></svg>
<svg class="b" style="left:1888px;top:265px;" width="28" height="30" viewBox="0 0 28 30"><path d="M0.5 0.5H22L27.5 6V29H0.5Z" fill="#e4e4e4" stroke="#c2c2c2" stroke-width="1"/></svg>
<svg class="b" style="left:1888px;top:295px;" width="28" height="30" viewBox="0 0 28 30"><path d="M0.5 0.5H22L27.5 6V29H0.5Z" fill="#e4e4e4" stroke="#c2c2c2" stroke-width="1"/></svg>
<svg class="b" style="left:1888px;top:325px;" width="28" height="30" viewBox="0 0 28 30"><path d="M0.5 0.5H22L27.5 6V29H0.5Z" fill="#e4e4e4" stroke="#c2c2c2" stroke-width="1"/></svg>
<svg class="b" style="left:1888px;top:355px;" width="28" height="30" viewBox="0 0 28 30"><path d="M0.5 0.5H22L27.5 6V29H0.5Z" fill="#e4e4e4" stroke="#c2c2c2" stroke-width="1"/></svg>
<svg class="b" style="left:1888px;top:385px;" width="28" height="30" viewBox="0 0 28 30"><path d="M0.5 0.5H22L27.5 6V29H0.5Z" fill="#e4e4e4" stroke="#c2c2c2" stroke-width="1"/></svg>
<svg class="b" style="left:1888px;top:415px;" width="28" height="30" viewBox="0 0 28 30"><path d="M0.5 0.5H22L27.5 6V29H0.5Z" fill="#e4e4e4" stroke="#c2c2c2" stroke-width="1"/></svg>
<svg class="b" style="left:1888px;top:445px;" width="28" height="30" viewBox="0 0 28 30"><path d="M0.5 0.5H22L27.5 6V29H0.5Z" fill="#e4e4e4" stroke="#c2c2c2" stroke-width="1"/></svg>
<svg class="b" style="left:1888px;top:475px;" width="28" height="30" viewBox="0 0 28 30"><path d="M0.5 0.5H22L27.5 6V29H0.5Z" fill="#e4e4e4" stroke="#c2c2c2" stroke-width="1"/></svg>
<svg class="b" style="left:1888px;top:505px;" width="28" height="30" viewBox="0 0 28 30"><path d="M0.5 0.5H22L27.5 6V29H0.5Z" fill="#e4e4e4" stroke="#c2c2c2" stroke-width="1"/></svg>
<svg class="b" style="left:1893.0px;top:183.0px;" width="17" height="14" viewBox="0 0 17 14"><path d="M0.6 13.4V1.6Q0.6 0.6 1.6 0.6H6L7.4 2.6H15.4Q16.4 2.6 16.4 3.6V13.4Z" fill="#fff" stroke="#333" stroke-width="1.1"/><rect x="1.2" y="4.4" width="14.6" height="8.6" fill="#2f49b3"/><path d="M5 6H12V11.6H5Z" fill="#fff"/><path d="M7.2 6L8.6 8.8 10 6V11.6H7.2Z" fill="#9aa6d8"/></svg>
<svg class="b" style="left:1893.0px;top:211.5px;" width="17" height="17" viewBox="0 0 17 17"><rect x="0.5" y="0.5" width="9.4" height="9.4" rx="1.8" fill="#c2323d" stroke="#a3222c" stroke-width="0.8"/><path d="M3.8 3.8L5.4 2.8V7.6" fill="none" stroke="#fff" stroke-width="1.3"/><circle cx="11" cy="11" r="5.6" fill="#6cab5a" stroke="#4f9a40" stroke-width="0.9"/><path d="M8.4 11.2L10.3 13 13.6 9.4" fill="none" stroke="#fff" stroke-width="1.6"/></svg>
<svg class="b" style="left:1893.0px;top:241.5px;" width="18" height="17" viewBox="0 0 18 17"><rect x="0.6" y="2.4" width="14.8" height="12.6" rx="1.6" fill="#fff" stroke="#777" stroke-width="1.1"/><path d="M0.6 4.2Q0.6 2.4 2.4 2.4H13.6Q15.4 2.4 15.4 4.2V5.6H0.6Z" fill="#f0963c"/><path d="M4 0.4V3.2M12 0.4V3.2" stroke="#777" stroke-width="1.2"/><path d="M5 9.8L7.2 12 11 7.6" fill="none" stroke="#3f9a30" stroke-width="1.5"/><path d="M11.6 13.6H17.6M14.6 10.6V16.6" stroke="#3f9a30" stroke-width="1.3"/></svg>
<svg class="b" style="left:1893.5px;top:272.0px;" width="16" height="16" viewBox="0 0 16 16"><circle cx="8" cy="3.6" r="2.8" fill="#d4d4d4" stroke="#777" stroke-width="1.1"/><path d="M0.8 15.2Q1 7.4 8 7.4Q15 7.4 15.2 15.2Z" fill="#e4e4e4" stroke="#777" stroke-width="1.1" stroke-linejoin="round"/></svg>
<svg class="b" style="left:1893.0px;top:302.0px;" width="17" height="16" viewBox="0 0 17 16"><rect x="0.6" y="4.6" width="6.4" height="3.6" rx="1.8" fill="#fff" stroke="#666" stroke-width="1"/><rect x="11" y="0.6" width="5" height="2.6" rx="1.3" fill="#fff" stroke="#666" stroke-width="0.9"/><rect x="11" y="5.2" width="5" height="2.6" rx="1.3" fill="#fff" stroke="#666" stroke-width="0.9"/><path d="M7 6.4H9V1.9H11M9 6.4H11M9 6.4V10.4H10" fill="none" stroke="#666" stroke-width="0.9"/><path d="M10.4 12.4H16.4M13.4 9.4V15.4" stroke="#3f9a30" stroke-width="1.3"/></svg>
<svg class="b" style="left:1892.5px;top:331.5px;" width="18" height="17" viewBox="0 0 18 17"><rect x="2.8" y="2.8" width="12" height="11.4" rx="1.6" fill="#fff" stroke="#777" stroke-width="1"/><rect x="0.5" y="0.5" width="11.6" height="11" rx="1.6" fill="#5b9be6" stroke="#3f83d6" stroke-width="0.9"/><path d="M1.6 10.4L5.4 5 8 8.6 9.4 7 11.4 10.4Z" fill="#9a9a9a"/><path d="M9 1.6L10.4 3 9 4.4 7.6 3Z" fill="#e0a24a"/><path d="M11.6 13.6H17.6M14.6 10.6V16.6" stroke="#3f9a30" stroke-width="1.3"/></svg>
<svg class="b" style="left:1893.5px;top:361.5px;" width="16" height="17" viewBox="0 0 16 17"><circle cx="6.4" cy="6.4" r="5.4" fill="#fff" stroke="#777" stroke-width="1.5"/><path d="M10.4 10.6L14.6 15.4" stroke="#777" stroke-width="2.6" stroke-linecap="round"/></svg>
<svg class="b" style="left:1893.0px;top:391.5px;" width="17" height="17" viewBox="0 0 17 17"><rect x="0.4" y="0.4" width="16.2" height="16.2" rx="2.6" fill="#2f49b3"/><path d="M3 6V3H6M11 3H14V6M14 11V14H11M6 14H3V11" fill="none" stroke="#fff" stroke-width="1.4"/><path d="M5.6 5.6H11.4V11.4H5.6Z" fill="#cfd6f0"/><path d="M7.4 5.6L8.5 8 9.6 5.6V11.4H7.4Z" fill="#8a96cc"/></svg>
<svg class="b" style="left:1893.0px;top:422.0px;" width="17" height="16" viewBox="0 0 17 16"><rect x="0.6" y="0.6" width="10" height="8" rx="1.6" fill="#fff" stroke="#777" stroke-width="1"/><path d="M2.6 3.4H8.6" stroke="#999" stroke-width="1.6"/><rect x="3.2" y="5.6" width="13" height="9.6" rx="1.8" fill="#fff" stroke="#3f7fd6" stroke-width="1.2"/><path d="M6.6 10.4H12.8" stroke="#3f7fd6" stroke-width="2.4"/></svg>
<svg class="b" style="left:1893.0px;top:452.0px;" width="17" height="16" viewBox="0 0 17 16"><rect x="7" y="3.2" width="9.6" height="9" fill="#fff" stroke="#1a73d0" stroke-width="1"/><path d="M7.4 3.6L11.8 7.8 16.2 3.6" fill="none" stroke="#1a73d0" stroke-width="1"/><path d="M0.4 2L9.4 0.4V15.6L0.4 14Z" fill="#0f6cc8"/><ellipse cx="5" cy="8" rx="1.7" ry="2.3" fill="none" stroke="#fff" stroke-width="1.3"/></svg>
<svg class="b" style="left:1893.0px;top:481.5px;" width="17" height="17" viewBox="0 0 17 17"><g fill="none" stroke="#777" stroke-width="1"><circle cx="8.5" cy="8.5" r="7.6" fill="#c9c9c9"/><ellipse cx="8.5" cy="8.5" rx="3.4" ry="7.6"/><path d="M8.5 0.9V16.1M0.9 8.5H16.1M2 4.6H15M2 12.4H15"/></g></svg>
<svg class="b" style="left:1893.0px;top:512.0px;" width="17" height="16" viewBox="0 0 17 16"><path d="M9 2.2H16.6V13.8H9Z" fill="#fff"/><path d="M10.4 3.4H16M10.4 5.6H16M10.4 7.8H16M10.4 10H16M10.4 12.2H16" stroke="#3a8a1e" stroke-width="1.3" stroke-dasharray="1.3 0.7"/><path d="M0.4 2L9.8 0.4V15.6L0.4 14Z" fill="#3d8a14"/><path d="M3 4.8L7 11.2M7 4.8L3 11.2" stroke="#fff" stroke-width="1.5"/></svg>
<div class="b" style="left:1362px;top:567px;width:2px;height:49px;background:#7f7f7f;"></div>
<div class="b" style="left:777px;top:1021px;width:103px;height:2px;background:#7f7f7f;"></div>
<div class="b" style="left:7px;top:1031px;width:1366px;height:1px;background:#fff;"></div>
<div class="b" style="left:2px;top:1033px;width:1375px;height:23px;background:#e5e5e5;"></div>
<div class="b" style="left:2px;top:1033px;width:3px;height:23px;background:#dfe7f6;"></div>
<div class="b" style="left:3px;top:1032px;width:1371px;height:1px;background:#aaa;"></div>
<svg class="b" style="left:0px;top:1032px;" width="240" height="24" viewBox="0 0 240 24"><path d="M19.4 0.5L38.6 21.5H227.6L229.6 19.5V0.5Z" fill="#fbfbfb"/><path d="M19.4 0.5L38.6 21.5H227.6L229.6 19.5V0.5" fill="none" stroke="#b4b4b4" stroke-width="1"/></svg>
<svg class="b" style="left:7px;top:1040px;" width="7" height="10" viewBox="0 0 7 10"><path d="M5.4 0.8V8.8L0.8 4.8Z" fill="none" stroke="#777" stroke-width="1.1"/></svg>
<svg class="b" style="left:1359.5px;top:1040px;" width="7" height="10" viewBox="0 0 7 10"><path d="M1 0.8V8.8L5.6 4.8Z" fill="none" stroke="#777" stroke-width="1.1"/></svg>
<svg class="b" style="left:48px;top:1034px;" width="14" height="16" viewBox="0 0 14 16"><path d="M1.6 0H10L14 4V14.4Q14 16 12.4 16H1.6Q0 16 0 14.4V1.6Q0 0 1.6 0Z" fill="#3b4fc0"/><path d="M10 0L14 4H10Z" fill="#c8cff0"/><path d="M3.6 6H10.8V14H3.6Z" fill="#fff"/><path d="M5.6 6L7.2 10 8.8 6V14H5.6Z" fill="#98a2d8"/></svg>
<div class="t" style="top:1035.79px;font-size:11px;line-height:14px;color:#333;font-family:'Liberation Sans', sans-serif;font-weight:700;left:76.50px;letter-spacing:0.032px;">Evénement &amp; Gantt*</div>
<svg class="b" style="left:196px;top:1039px;" width="7" height="7" viewBox="0 0 7 7"><path d="M0.5 2.6V0.5H2.6M2.6 2.6L6 6M6 3V6H3" fill="none" stroke="#555" stroke-width="1"/></svg>
<svg class="b" style="left:214.5px;top:1039px;" width="8" height="8" viewBox="0 0 8 8"><path d="M0.6 0.6L7 7M7 0.6L0.6 7" stroke="#444" stroke-width="1.3"/></svg>
<div class="b" style="left:2px;top:1056px;width:1916px;height:1px;background:#cfcfcf;"></div>
<div class="b" style="left:2px;top:1057px;width:1916px;height:21px;background:#f1f1f1;"></div>
<div class="b" style="left:0px;top:884px;width:3.5px;height:147px;background:#1a1a1a;border-radius:0 3px 3px 0;"></div>
<svg class="b" style="left:6px;top:1059px;" width="17" height="17" viewBox="0 0 17 17"><path d="M1 15.6L3.2 11.6 12.6 2.2Q13.8 1 15 2.2Q16.2 3.4 15 4.6L5.6 14Z" fill="#e6e6e6" stroke="#666" stroke-width="1"/><path d="M9.4 5.4L12 8" stroke="#3f7fd6" stroke-width="2.2"/><path d="M12.6 9.4L15.4 6.6V10" fill="none" stroke="#666" stroke-width="0.9"/></svg>
<div class="b" style="left:26.5px;top:1059px;width:21px;height:18px;background:#c8c8c8;border:1px solid #2b579a;"></div>
<svg class="b" style="left:32px;top:1060px;" width="10" height="16" viewBox="0 0 10 16"><rect x="0.6" y="0.6" width="8.8" height="14.4" rx="4.4" fill="#fff" stroke="#777" stroke-width="1"/><path d="M0.6 6.4V5Q0.6 0.6 5 0.6V6.4Z" fill="#3f7fd6"/><path d="M0.6 6.4H9.4M5 0.6V6.4" stroke="#777" stroke-width="0.8"/></svg>
<svg class="b" style="left:1307px;top:1061px;" width="6" height="15" viewBox="0 0 6 15"><path d="M3 0.6L5.4 3.8H0.6ZM3 14.4L5.4 11.2H0.6Z" fill="#444"/></svg>
<div class="t" style="top:1060.87px;font-size:12.5px;line-height:16px;color:#1b3a9b;font-family:'Liberation Sans', sans-serif;font-weight:700;left:1319.00px;letter-spacing:0.779px;">00:00:00</div>
<svg class="b" style="left:1394px;top:1067px;" width="5" height="4" viewBox="0 0 5 4"><path d="M0 0.3H5L2.5 3.2Z" fill="#444"/></svg>
<svg class="b" style="left:1413.5px;top:1061.5px;" width="17" height="16" viewBox="0 0 17 16"><path d="M0.4 0.6H16.2L10.2 7.6V15.4L6.6 13.6V7.6Z" fill="#6e6e6e"/><path d="M11.6 1.6L8.2 7.8V13.6" fill="none" stroke="#9a9a9a" stroke-width="1"/></svg>
<svg class="b" style="left:1432.5px;top:1067px;" width="5" height="4" viewBox="0 0 5 4"><path d="M0 0.3H5L2.5 3.2Z" fill="#444"/></svg>
<svg class="b" style="left:1444.7px;top:1061.5px;" width="18" height="16" viewBox="0 0 18 16"><path d="M0.4 0.6H16.2L10.2 7.6V15.4L6.6 13.6V7.6Z" fill="#6e6e6e"/><path d="M11.6 1.6L8.2 7.8V13.6" fill="none" stroke="#9a9a9a" stroke-width="1"/><path d="M14.6 6.4L11 11.2H13.4L11.8 15.8 16.6 10H14.2L16 6.4Z" fill="#5a5a5a" stroke="#f1f1f1" stroke-width="0.6"/></svg>
<svg class="b" style="left:1464px;top:1067px;" width="5" height="4" viewBox="0 0 5 4"><path d="M0 0.3H5L2.5 3.2Z" fill="#444"/></svg>
<svg class="b" style="left:1484px;top:1061px;" width="16" height="16" viewBox="0 0 16 16"><path d="M5.2 2.3A6.7 6.7 0 1 1 1.5 6.6" fill="none" stroke="#6e6e6e" stroke-width="1.3"/><path d="M4.2 0.2L8.4 1.6 5 4.4Z" fill="#6e6e6e"/><path d="M4.2 8.4H11.8M8 4.6V12.2" stroke="#6e6e6e" stroke-width="1.9"/></svg>
<svg class="b" style="left:1503px;top:1067px;" width="5" height="4" viewBox="0 0 5 4"><path d="M0 0.3H5L2.5 3.2Z" fill="#444"/></svg>
<svg class="b" style="left:1515px;top:1061.5px;" width="16" height="15" viewBox="0 0 16 15"><rect x="0.6" y="0.6" width="14.6" height="13.8" rx="1.6" fill="#f4f4f4" stroke="#cfcfcf" stroke-width="1.1"/><g fill="#c6c6c6"><circle cx="7.9" cy="7.5" r="2"/><circle cx="4" cy="3.8" r="0.9"/><circle cx="11.8" cy="3.8" r="0.9"/><circle cx="4" cy="11.2" r="0.9"/><circle cx="11.8" cy="11.2" r="0.9"/></g></svg>
<svg class="b" style="left:1538.5px;top:1061.5px;" width="15" height="16" viewBox="0 0 15 16"><rect x="0.7" y="0.7" width="13.6" height="14" rx="2" fill="#fff" stroke="#6e6e6e" stroke-width="1.3"/><path d="M3.4 4H10.4M3.4 6.6H7.6M3.4 9.2H8.6M3.4 11.8H7.6" stroke="#6e6e6e" stroke-width="1.1"/></svg>
<svg class="b" style="left:1562px;top:1061.5px;" width="15" height="16" viewBox="0 0 15 16"><rect x="0.7" y="0.7" width="13.6" height="14" rx="1.8" fill="#fff" stroke="#6e6e6e" stroke-width="1.3"/><path d="M0.7 2.5Q0.7 0.7 2.5 0.7H12.5Q14.3 0.7 14.3 2.5V5.6H0.7Z" fill="#6e6e6e"/></svg>
<div class="t" style="top:1066.60px;font-size:7.5px;line-height:10px;color:#6a6a6a;font-family:'Liberation Sans', sans-serif;font-weight:700;left:1569.60px;transform:translateX(-50%);">24</div>
<svg class="b" style="left:1586px;top:1061.5px;" width="15" height="16" viewBox="0 0 15 16"><rect x="0.7" y="0.7" width="13.6" height="14" rx="2" fill="#fff" stroke="#6e6e6e" stroke-width="1.3"/><rect x="3" y="3" width="5.6" height="5.6" rx="1" fill="#fff" stroke="#6e6e6e" stroke-width="1.6"/><circle cx="9.4" cy="9.8" r="2.9" fill="#fff" stroke="#6e6e6e" stroke-width="1.7"/></svg>
<svg class="b" style="left:1610px;top:1061.5px;" width="15" height="16" viewBox="0 0 15 16"><rect x="0.7" y="0.7" width="13.6" height="14" rx="2" fill="#fff" stroke="#6e6e6e" stroke-width="1.3"/><path d="M2.8 10L8.2 4H12.2V7.8L6.6 13.6Z" fill="#6e6e6e"/><circle cx="10.2" cy="6" r="0.9" fill="#fff"/><path d="M5.4 10.4L8.2 7.4" stroke="#fff" stroke-width="0.9"/></svg>
<svg class="b" style="left:1635px;top:1061.5px;" width="16" height="16" viewBox="0 0 16 16"><rect x="1.6" y="0.7" width="13" height="14" rx="1.6" fill="#fff" stroke="#6e6e6e" stroke-width="1.2"/><path d="M1.6 3.2H14.6" stroke="#6e6e6e" stroke-width="1.4"/><path d="M0.4 4H2.6M0.4 7H2.6M0.4 10H2.6M0.4 13H2.6" stroke="#6e6e6e" stroke-width="1"/><path d="M5 5.8H12.6M5 8H12.6M5 10.2H9" stroke="#6e6e6e" stroke-width="0.9"/><rect x="8.6" y="11.4" width="4.6" height="3.4" fill="#6e6e6e" stroke="#fff" stroke-width="0.5"/></svg>
<div class="t" style="top:1061.19px;font-size:11px;line-height:14px;color:#444;font-family:'Liberation Sans', sans-serif;left:1662.00px;letter-spacing:-0.301px;">227 %</div>
<div class="b" style="left:1709px;top:1068px;width:8px;height:2px;background:#a6a6a6;"></div>
<div class="b" style="left:1727px;top:1068.5px;width:87px;height:1px;background:#bdbdbd;"></div>
<div class="b" style="left:1786px;top:1061.5px;width:4px;height:14px;background:#f6f6f6;border:1px solid #aaa;"></div>
<svg class="b" style="left:1824px;top:1064.5px;" width="9" height="9" viewBox="0 0 9 9"><path d="M0.2 4.5H8.8M4.5 0.2V8.8" stroke="#a6a6a6" stroke-width="1.9"/></svg>
<svg class="b" style="left:1842px;top:1063px;" width="14" height="13" viewBox="0 0 14 13"><rect x="0.6" y="0.6" width="12.8" height="11.8" fill="none" stroke="#555" stroke-width="1.1"/><path d="M7 2.6V10.4M3.2 6.5H10.8M5.4 4L7 2.4 8.6 4M5.4 9L7 10.6 8.6 9M4.6 5L3 6.5 4.6 8M9.4 5L11 6.5 9.4 8" fill="none" stroke="#555" stroke-width="0.9"/></svg>
<svg class="b" style="left:1872px;top:1061px;" width="15" height="15" viewBox="0 0 15 15"><rect x="0.7" y="0.7" width="13.6" height="13.6" fill="#666" stroke="#555" stroke-width="1.2"/><rect x="8.4" y="3.6" width="4.6" height="10" fill="#fff"/></svg>
<svg class="b" style="left:1890px;top:1067px;" width="5" height="4" viewBox="0 0 5 4"><path d="M0 0.3H5L2.5 3.2Z" fill="#444"/></svg>
<svg class="b" style="left:1903px;top:1066px;" width="9" height="9" viewBox="0 0 9 9"><g fill="#b4b4b4"><rect x="6" y="0" width="2" height="2"/><rect x="3" y="3" width="2" height="2"/><rect x="6" y="3" width="2" height="2"/><rect x="0" y="6" width="2" height="2"/><rect x="3" y="6" width="2" height="2"/><rect x="6" y="6" width="2" height="2"/></g></svg>
</body></html>
